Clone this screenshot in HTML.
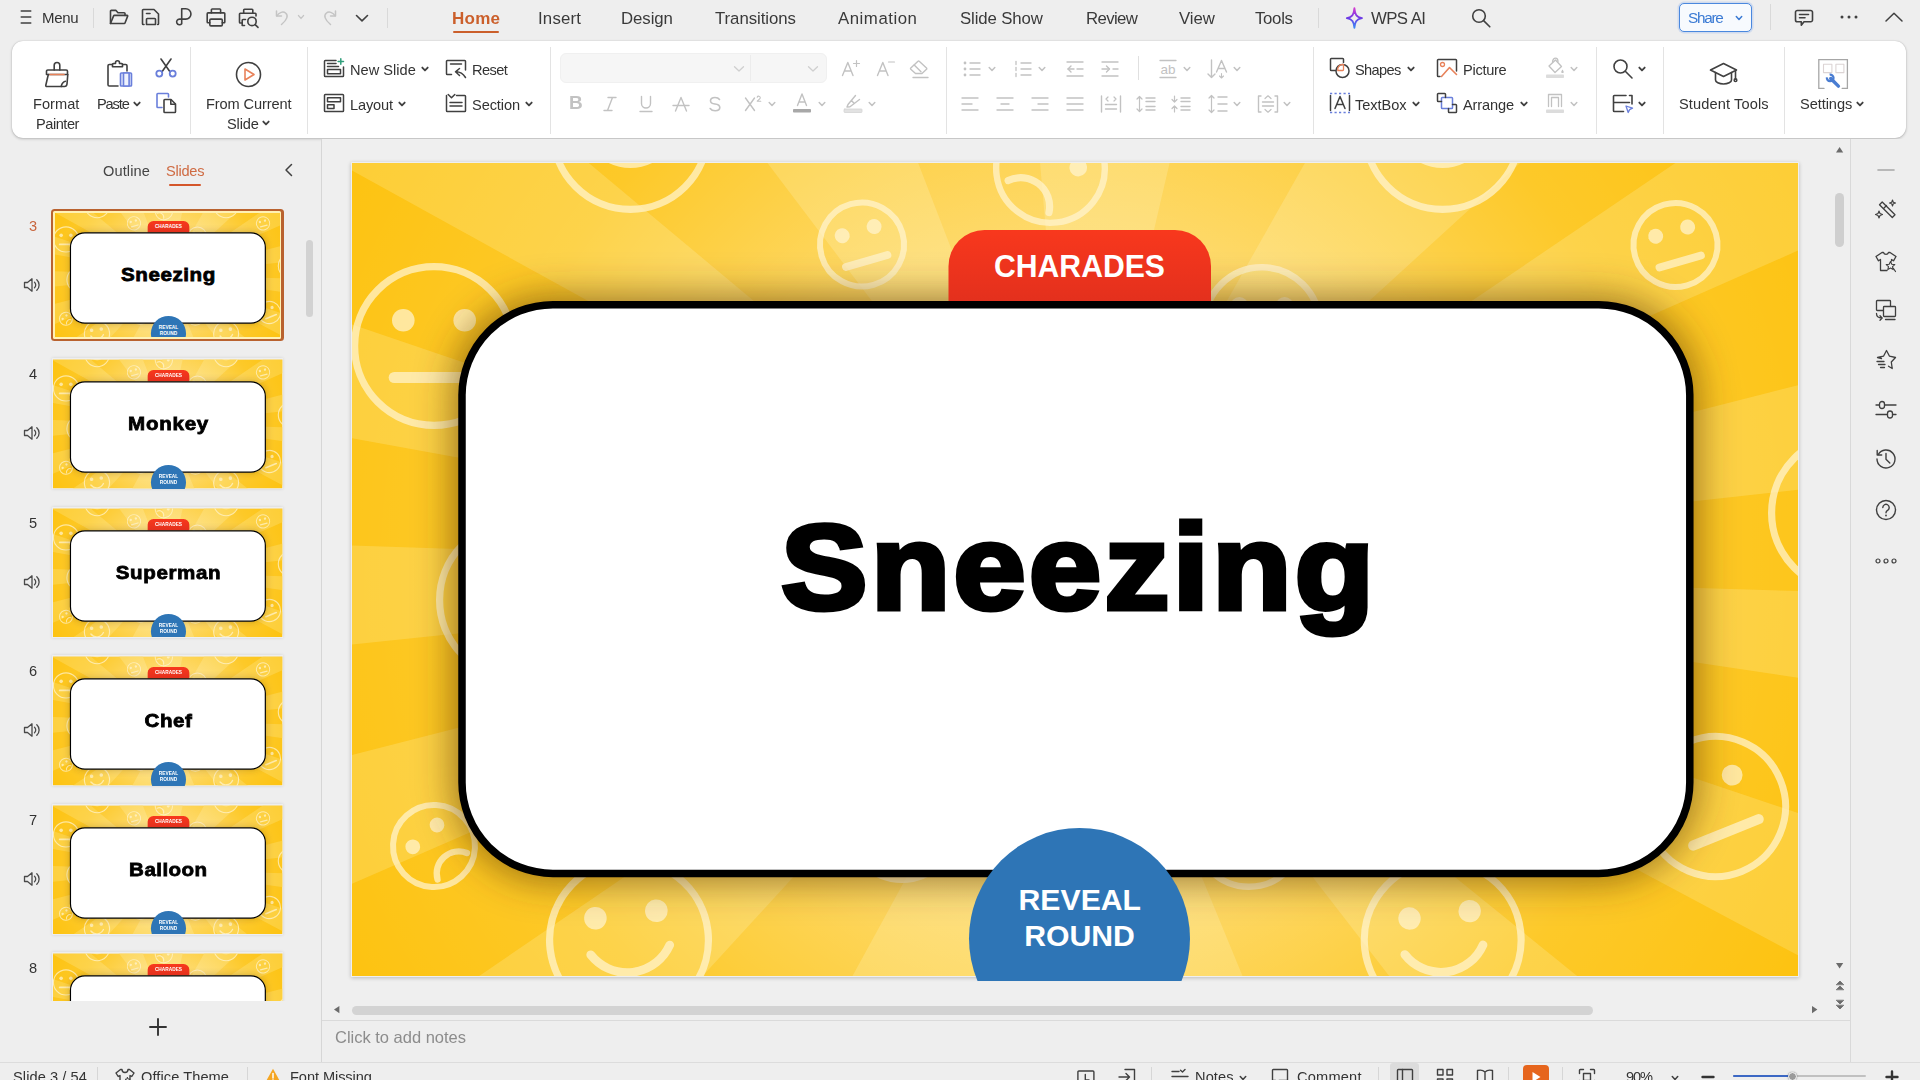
<!DOCTYPE html><html lang="en"><head><meta charset="utf-8"><title>WPS Presentation</title><style>
*{box-sizing:border-box;margin:0;padding:0}
html,body{width:1920px;height:1080px;overflow:hidden;background:#eee}
body{font-family:"Liberation Sans",Arial,sans-serif;color:#333;position:relative;font-size:14.6px}
.a{position:absolute}
.t{position:absolute;white-space:nowrap;line-height:20px;height:20px;will-change:transform}
.tab{position:absolute;white-space:nowrap;font-size:16.8px;line-height:22px;top:7px;color:#3a3a3a;will-change:transform}
.vs{position:absolute;width:1px;background:#dcdcdc}
#ribbon{position:absolute;left:12px;top:41px;width:1894px;height:97px;background:#fff;border-radius:11px;box-shadow:0 1px 3px rgba(0,0,0,.22),0 0 1px rgba(0,0,0,.25)}
.rs{position:absolute;width:1px;top:55px;height:78px;background:#e4e4e4}
.dis{color:#bdbdbd}
svg.ic{overflow:visible}
.ic{position:absolute;overflow:visible}
.num{position:absolute;left:0;width:66px;text-align:center;font-size:14.6px;color:#333;line-height:18px;will-change:transform}
</style></head><body>
<svg class="ic" style="left:20.00px;top:9.20px" width="12" height="16" viewBox="0 0 12 16" fill="none" stroke="#404040" stroke-width="1.45" stroke-linecap="round" stroke-linejoin="round" ><path d="M1.200 2H10.800M1.200 8H10.800M1.200 14H10.800"/></svg><div class="t" style="left:41.50px;top:8px;font-size:15px;letter-spacing:-0.333px;">Menu</div><div class="a" style="left:93px;top:8px;width:1px;height:20px;background:#d9d9d9"></div><svg class="ic" style="left:109.00px;top:8.00px" width="20" height="18" viewBox="0 0 20 18" fill="none" stroke="#404040" stroke-width="1.6" stroke-linecap="round" stroke-linejoin="round" ><path d="M1.5 15.5V3.2a.8.8 0 0 1 .8-.8H7l2 2.4h6.2a.8.8 0 0 1 .8.8V7.4"/><path d="M1.5 15.5L4.6 7.9a.8.8 0 0 1 .75-.5H18.2a.5.5 0 0 1 .47.7L16 15a.8.8 0 0 1-.75.5z"/></svg><svg class="ic" style="left:141.00px;top:8.00px" width="20" height="18" viewBox="0 0 20 18" fill="none" stroke="#404040" stroke-width="1.6" stroke-linecap="round" stroke-linejoin="round" ><path d="M3 16.5H2.3a.8.8 0 0 1-.8-.8V2.3a.8.8 0 0 1 .8-.8H13l4.5 4.5v9.7a.8.8 0 0 1-.8.8H17"/><path d="M5.5 16.5V11.3a.8.8 0 0 1 .8-.8h7.4a.8.8 0 0 1 .8.8V16.5z"/><path d="M5.5 5.5H9"/></svg><svg class="ic" style="left:175.00px;top:8.00px" width="18" height="18" viewBox="0 0 18 18" fill="none" stroke="#404040" stroke-width="1.6" stroke-linecap="round" stroke-linejoin="round" ><path d="M6.700 .8H10.800a5.150 5.150 0 0 1 0 10.300H4.500a2.850 2.850 0 1 0 2.200 4.650V.8"/></svg><svg class="ic" style="left:205.50px;top:7.70px" width="20" height="19" viewBox="0 0 20 19" fill="none" stroke="#404040" stroke-width="1.6" stroke-linecap="round" stroke-linejoin="round" ><path d="M5.400 4.900V1.800a.8.800 0 0 1 .8-.8h7.600a.8.800 0 0 1 .8.800V4.900"/><path d="M3.800 14.800H2a.8.800 0 0 1-.8-.8V5.700a.8.800 0 0 1 .8-.8H18a.8.800 0 0 1 .8.800V14a.8.800 0 0 1-.8.800H16.300"/><rect x="3.800" y="11.100" width="12.500" height="6.800" rx="1.200"/></svg><svg class="ic" style="left:237.50px;top:7.50px" width="21" height="20" viewBox="0 0 21 20" fill="none" stroke="#404040" stroke-width="1.6" stroke-linecap="round" stroke-linejoin="round" ><path d="M5.700 5.200V2a.8.800 0 0 1 .8-.8h7.500a.8.800 0 0 1 .8.800V5.200"/><path d="M4.200 15H2.300a.8.800 0 0 1-.8-.8V6a.8.800 0 0 1 .8-.8H17.200a.8.800 0 0 1 .8.800V8"/><path d="M7.500 11.500H5a.8.800 0 0 0-.8.800V17.500h2.300"/><circle cx="14" cy="13.400" r="4.200"/><path d="M17.200 16.600L20 19.400"/></svg><svg class="ic" style="left:274.50px;top:9.00px" width="14" height="17" viewBox="0 0 14 17" fill="none" stroke="#c4c4c4" stroke-width="1.5" stroke-linecap="round" stroke-linejoin="round" ><path d="M1.5 2v5h5"/><path d="M1.8 6.8C4 3.3 8.2 2 10.8 4.2c2.600 2.200 1.500 6.500-4.300 11.300"/></svg><svg class="ic" style="left:295.80px;top:13.00px" width="10" height="8" viewBox="0 0 10 8" fill="none" stroke="#c4c4c4" stroke-width="1.4" stroke-linecap="round" stroke-linejoin="round" ><path d="M2.5 2.6L5 5.4L7.5 2.6"/></svg><svg class="ic" style="left:322.50px;top:9.00px" width="14" height="17" viewBox="0 0 14 17" fill="none" stroke="#c4c4c4" stroke-width="1.5" stroke-linecap="round" stroke-linejoin="round" ><path d="M12.500 2v5h-5"/><path d="M12.200 6.800C10 3.300 5.800 2 3.200 4.200c-2.600 2.200-1.500 6.500 4.300 11.300"/></svg><svg class="ic" style="left:355.00px;top:14.00px" width="14" height="8" viewBox="0 0 14 8" fill="none" stroke="#404040" stroke-width="1.6" stroke-linecap="round" stroke-linejoin="round" ><path d="M1.500 1.500L7 6.800L12.500 1.500"/></svg><div class="a" style="left:387px;top:8px;width:1px;height:20px;background:#d9d9d9"></div><div class="tab" style="left:452.00px;top:8px;font-size:17px;font-weight:bold;letter-spacing:0.267px;color:#cb5f2b">Home</div><div class="a" style="left:453px;top:30.700px;width:46px;height:2.600px;border-radius:1.300px;background:#cb5f2b"></div><div class="tab" style="left:538.00px;top:8px;font-size:16.8px;letter-spacing:0.200px;">Insert</div><div class="tab" style="left:621.00px;top:8px;font-size:16.8px;letter-spacing:-0.060px;">Design</div><div class="tab" style="left:715.00px;top:8px;font-size:16.8px;letter-spacing:-0.050px;">Transitions</div><div class="tab" style="left:838.00px;top:8px;font-size:16.8px;letter-spacing:0.537px;">Animation</div><div class="tab" style="left:960.00px;top:8px;font-size:16.8px;letter-spacing:-0.122px;">Slide Show</div><div class="tab" style="left:1086.00px;top:8px;font-size:16.8px;letter-spacing:-0.640px;">Review</div><div class="tab" style="left:1179.00px;top:8px;font-size:16.8px;letter-spacing:-0.067px;">View</div><div class="tab" style="left:1255.00px;top:8px;font-size:16.8px;letter-spacing:-0.300px;">Tools</div><div class="a" style="left:1318px;top:8px;width:1px;height:20px;background:#d9d9d9"></div><svg class="ic" style="left:1346.2px;top:6.5px" width="17" height="22" viewBox="0 0 17 22"><defs><linearGradient id="ai" x1="0" y1="0" x2="0" y2="1"><stop offset="0" stop-color="#d23ad0"/><stop offset=".5" stop-color="#6c3be6"/><stop offset="1" stop-color="#3a8af5"/></linearGradient></defs><path d="M8.400 1.200C9 7 10 10.200 16 11.200C10 12.200 9 15.200 8.400 20.800C7.800 15.200 6.800 12.200 .8 11.200C6.800 10.200 7.800 7 8.400 1.200z" fill="none" stroke="url(#ai)" stroke-width="1.800" stroke-linejoin="round"/></svg><div class="tab" style="left:1371.00px;top:8px;font-size:16.8px;letter-spacing:-0.580px;">WPS AI</div><svg class="ic" style="left:1470.50px;top:7.60px" width="20" height="20" viewBox="0 0 20 20" fill="none" stroke="#404040" stroke-width="1.6" stroke-linecap="round" stroke-linejoin="round" ><circle cx="8" cy="8" r="6.300"/><path d="M12.600 12.600L18.800 18.800"/></svg><div class="a" style="left:1679px;top:3px;width:73px;height:29px;border:1.5px solid #4a88de;border-radius:5px;background:#f7fafe;box-shadow:0 0 0 1.5px rgba(120,165,240,.25)"></div><div class="t" style="left:1687.80px;top:7.5px;font-size:15.3px;letter-spacing:-1.250px;color:#3a7ad4">Share</div><svg class="ic" style="left:1734.30px;top:13.50px" width="10" height="8" viewBox="0 0 10 8" fill="none" stroke="#3a7ad4" stroke-width="1.5" stroke-linecap="round" stroke-linejoin="round" ><path d="M2.3 2.5L5 5.5L7.7 2.5"/></svg><div class="a" style="left:1770px;top:4px;width:1px;height:26px;background:#d9d9d9"></div><svg class="ic" style="left:1793.70px;top:8.80px" width="20" height="18" viewBox="0 0 20 18" fill="none" stroke="#404040" stroke-width="1.6" stroke-linecap="round" stroke-linejoin="round" ><path d="M3.300 1.500H16.700a1.800 1.800 0 0 1 1.800 1.800V11a1.800 1.800 0 0 1-1.800 1.800H10L7.300 16.200V12.800H3.300A1.800 1.800 0 0 1 1.500 11V3.300a1.800 1.800 0 0 1 1.800-1.800z"/><path d="M5.500 5.500H14.500M5.500 8.800H11"/></svg><svg class="ic" style="left:1840.00px;top:15.00px" width="18" height="4" viewBox="0 0 18 4" fill="none" stroke="#404040" stroke-width="1.5" stroke-linecap="round" stroke-linejoin="round" ><circle cx="2" cy="2" r="1.500" fill="#404040" stroke="none"/><circle cx="9" cy="2" r="1.500" fill="#404040" stroke="none"/><circle cx="16" cy="2" r="1.500" fill="#404040" stroke="none"/></svg><svg class="ic" style="left:1885.00px;top:11.50px" width="18" height="10" viewBox="0 0 18 10" fill="none" stroke="#404040" stroke-width="1.5" stroke-linecap="round" stroke-linejoin="round" ><path d="M1 9L9 1.200L17 9"/></svg>
<div id="ribbon"></div>
<svg class="ic" style="left:43.50px;top:60.70px" width="26" height="27" viewBox="0 0 26 27" fill="none" stroke="#404040" stroke-width="1.6" stroke-linecap="round" stroke-linejoin="round" ><path d="M10.200 9V4.300a2.800 2.800 0 0 1 5.600 0V9"/><path d="M3.800 9H22.200a1.300 1.300 0 0 1 1.300 1.300V13.500H2.500V10.300A1.300 1.300 0 0 1 3.800 9z"/><path d="M4.300 13.500L1.800 24.300a1 1 0 0 0 1 1.200H20.500c1.600 0 2.300-1 2.500-2.500l.8-9.500"/><path d="M17.200 25.500c.6-2.800 1.800-4.600 4.200-5.200"/><path d="M6 13.500H20" stroke="#e8825a"/></svg><div class="t" style="left:32.70px;top:94.39999999999999px;font-size:14.6px;letter-spacing:0.020px;">Format</div><div class="t" style="left:36.00px;top:114.1px;font-size:14.6px;letter-spacing:-0.467px;">Painter</div><svg class="ic" style="left:105.00px;top:60.30px" width="28" height="28" viewBox="0 0 28 28" fill="none" stroke="#404040" stroke-width="1.6" stroke-linecap="round" stroke-linejoin="round" ><path d="M7.500 4.500H4.300A1.300 1.300 0 0 0 3 5.800V24.700A1.300 1.300 0 0 0 4.300 26H13"/><path d="M17.500 4.500h3.200A1.300 1.300 0 0 1 22 5.800V11"/><path d="M7.500 6.800V4.300a.8.800 0 0 1 .8-.8h2.200V2.800a2 2 0 0 1 4 0v.7h2.200a.8.800 0 0 1 .8.800V6.800z"/><rect x="15.500" y="13" width="11" height="13" rx=".8" stroke="#6a7fdb" fill="#dfe6fb"/><rect x="18.500" y="13" width="5.600" height="13" stroke="#6a7fdb" fill="#eef2fd"/></svg><div class="t" style="left:96.90px;top:94.39999999999999px;font-size:14.6px;letter-spacing:-1.125px;">Paste</div><svg class="ic" style="left:132.00px;top:100.20px" width="10" height="8" viewBox="0 0 10 8" fill="none" stroke="#404040" stroke-width="1.8" stroke-linecap="round" stroke-linejoin="round" ><path d="M2.3 2.55L5 5.45L7.7 2.55"/></svg><svg class="ic" style="left:154.50px;top:58.30px" width="22" height="20" viewBox="0 0 22 20" fill="none" stroke="#404040" stroke-width="1.6" stroke-linecap="round" stroke-linejoin="round" ><path d="M6 1L14.800 13.500M16 1L7.200 13.500"/><circle cx="4.300" cy="15.600" r="3" stroke="#6a7fdb" stroke-width="1.800"/><circle cx="17.700" cy="15.600" r="3" stroke="#6a7fdb" stroke-width="1.800"/></svg><svg class="ic" style="left:154.50px;top:92.40px" width="22" height="22" viewBox="0 0 22 22" fill="none" stroke="#404040" stroke-width="1.6" stroke-linecap="round" stroke-linejoin="round" ><path d="M7 15.500H2.800a.8.800 0 0 1-.8-.8V2.300a.8.800 0 0 1 .8-.8H12.700a.8.800 0 0 1 .8.800V5" stroke="#6a7fdb"/><path d="M9.800 7.500H16L20.500 12V19.700a.8.800 0 0 1-.8.800H9.800a.8.800 0 0 1-.8-.8V8.300a.8.800 0 0 1 .8-.8z"/><path d="M15.800 7.800V12.200H20.200"/></svg><div class="a" style="left:190px;top:47px;width:1px;height:87px;background:#e3e3e3"></div><svg class="ic" style="left:235.00px;top:60.70px" width="27" height="27" viewBox="0 0 27 27" fill="none" stroke="#404040" stroke-width="1.6" stroke-linecap="round" stroke-linejoin="round" ><circle cx="13.500" cy="13.500" r="12"/><path d="M10 8L19 13.500L10 19z" stroke="#e8825a" stroke-width="1.600"/></svg><div class="t" style="left:206.00px;top:94.39999999999999px;font-size:14.6px;letter-spacing:-0.100px;">From Current</div><div class="t" style="left:227.00px;top:114.1px;font-size:14.6px;letter-spacing:-0.125px;">Slide</div><svg class="ic" style="left:261.00px;top:118.80px" width="10" height="8" viewBox="0 0 10 8" fill="none" stroke="#404040" stroke-width="1.8" stroke-linecap="round" stroke-linejoin="round" ><path d="M2.3 2.55L5 5.45L7.7 2.55"/></svg><div class="a" style="left:307px;top:47px;width:1px;height:87px;background:#e3e3e3"></div><svg class="ic" style="left:323.00px;top:58.30px" width="22" height="20" viewBox="0 0 22 20" fill="none" stroke="#404040" stroke-width="1.5" stroke-linecap="round" stroke-linejoin="round" ><path d="M13 2.500H2.300a.8.800 0 0 0-.8.800V17.700a.8.800 0 0 0 .8.800H19.700a.8.800 0 0 0 .8-.8V9"/><path d="M4.500 5.500H13M4.500 8.500H15.500"/><rect x="4.500" y="11.500" width="13" height="4.200"/><path d="M17.800 .8V6.200M15.100 3.500H20.500" stroke="#2f9e7a" stroke-width="1.500"/></svg><div class="t" style="left:349.70px;top:59.5px;font-size:14.6px;letter-spacing:0.012px;">New Slide</div><svg class="ic" style="left:420.20px;top:65.00px" width="10" height="8" viewBox="0 0 10 8" fill="none" stroke="#404040" stroke-width="1.8" stroke-linecap="round" stroke-linejoin="round" ><path d="M2.3 2.55L5 5.45L7.7 2.55"/></svg><svg class="ic" style="left:323.00px;top:93.30px" width="22" height="20" viewBox="0 0 22 20" fill="none" stroke="#404040" stroke-width="1.5" stroke-linecap="round" stroke-linejoin="round" ><rect x="1.500" y="1.500" width="19" height="17" rx=".8"/><rect x="4.500" y="4.800" width="13" height="4"/><rect x="4.500" y="11.800" width="6.500" height="3.600"/></svg><div class="t" style="left:349.70px;top:94.5px;font-size:14.6px;letter-spacing:-0.160px;">Layout</div><svg class="ic" style="left:397.20px;top:99.80px" width="10" height="8" viewBox="0 0 10 8" fill="none" stroke="#404040" stroke-width="1.8" stroke-linecap="round" stroke-linejoin="round" ><path d="M2.3 2.55L5 5.45L7.7 2.55"/></svg><svg class="ic" style="left:445.00px;top:58.60px" width="22" height="20" viewBox="0 0 22 20" fill="none" stroke="#404040" stroke-width="1.5" stroke-linecap="round" stroke-linejoin="round" ><path d="M6.500 15.500H2.300a.8.800 0 0 1-.8-.8V2.300a.8.800 0 0 1 .8-.8H19.700a.8.800 0 0 1 .8.800V11"/><path d="M5.500 5H16.500"/><path d="M20.500 18.500C18 14.500 15 12.800 11 12.800M14.500 9.500L10.500 12.800L14.500 16.500"/></svg><div class="t" style="left:471.50px;top:59.5px;font-size:14.6px;letter-spacing:-0.575px;">Reset</div><svg class="ic" style="left:445.00px;top:92.80px" width="22" height="20" viewBox="0 0 22 20" fill="none" stroke="#404040" stroke-width="1.5" stroke-linecap="round" stroke-linejoin="round" ><path d="M11.500 2.500H19.700a.8.800 0 0 1 .8.800V17.700a.8.800 0 0 1-.8.800H2.300a.8.800 0 0 1-.8-.8V2.500"/><path d="M3.200 1.500L6.500 4.800L9.800 1.500"/><path d="M5 9.500H17M5 13H17"/></svg><div class="t" style="left:471.50px;top:94.5px;font-size:14.6px;letter-spacing:-0.100px;">Section</div><svg class="ic" style="left:524.40px;top:99.80px" width="10" height="8" viewBox="0 0 10 8" fill="none" stroke="#404040" stroke-width="1.8" stroke-linecap="round" stroke-linejoin="round" ><path d="M2.3 2.55L5 5.45L7.7 2.55"/></svg><div class="a" style="left:550px;top:47px;width:1px;height:87px;background:#e3e3e3"></div><div class="a" style="left:560px;top:53px;width:267px;height:30px;border-radius:6px;background:#f6f6f6;border:1px solid #f0f0f0"></div><div class="a" style="left:750px;top:55px;width:1px;height:26px;background:#ececec"></div><svg class="ic" style="left:732.50px;top:64.50px" width="12" height="8" viewBox="0 0 12 8" fill="none" stroke="#cfcfcf" stroke-width="1.3" stroke-linecap="round" stroke-linejoin="round" ><path d="M1.500 1.800L6 6L10.500 1.800"/></svg><svg class="ic" style="left:807.00px;top:64.50px" width="12" height="8" viewBox="0 0 12 8" fill="none" stroke="#cfcfcf" stroke-width="1.3" stroke-linecap="round" stroke-linejoin="round" ><path d="M1.500 1.800L6 6L10.500 1.800"/></svg><svg class="ic" style="left:840.50px;top:59.00px" width="20" height="18" viewBox="0 0 20 18" fill="none" stroke="#c2c2c2" stroke-width="1.4" stroke-linecap="round" stroke-linejoin="round" ><path d="M1.500 16.500L6.800 3.500L12 16.500M3.300 12H10.200"/><path d="M15.500 1.500V7.500M12.500 4.500H18.500" stroke-width="1.200"/></svg><svg class="ic" style="left:875.50px;top:59.00px" width="20" height="18" viewBox="0 0 20 18" fill="none" stroke="#c2c2c2" stroke-width="1.4" stroke-linecap="round" stroke-linejoin="round" ><path d="M1.500 16.500L6.800 3.500L12 16.500M3.300 12H10.200"/><path d="M12.500 3H18.500" stroke-width="1.200"/></svg><svg class="ic" style="left:908.00px;top:59.00px" width="22" height="20" viewBox="0 0 22 20" fill="none" stroke="#c2c2c2" stroke-width="1.4" stroke-linecap="round" stroke-linejoin="round" ><path d="M7.500 14.500L2.800 10.200a.9.900 0 0 1 0-1.300L10 2.300a.9.900 0 0 1 1.200 0L18.500 9a.9.900 0 0 1 0 1.300L14 14.500z"/><path d="M6.200 6L13 12.800"/><path d="M5 18.500H20"/></svg><div class="t" style="left:569.00px;top:92.6px;font-size:14.6px;font-weight:bold;font-size:19px;color:#c2c2c2">B</div><svg class="ic" style="left:602.00px;top:95.50px" width="16" height="16" viewBox="0 0 16 16" fill="none" stroke="#c2c2c2" stroke-width="1.4" stroke-linecap="round" stroke-linejoin="round" ><path d="M6 1.500H14M2 14.500H10M10.500 1.500L5.500 14.500"/></svg><svg class="ic" style="left:639.00px;top:95.00px" width="14" height="18" viewBox="0 0 14 18" fill="none" stroke="#c2c2c2" stroke-width="1.4" stroke-linecap="round" stroke-linejoin="round" ><path d="M2.500 1.500V8.500a4.500 4.500 0 0 0 9 0V1.500"/><path d="M1 16.500H13"/></svg><svg class="ic" style="left:671.70px;top:95.50px" width="18" height="16" viewBox="0 0 18 16" fill="none" stroke="#c2c2c2" stroke-width="1.4" stroke-linecap="round" stroke-linejoin="round" ><path d="M3.500 15L9 1.500L14.500 15"/><path d="M1 9.500H17"/></svg><svg class="ic" style="left:708.00px;top:95.50px" width="14" height="16" viewBox="0 0 14 16" fill="none" stroke="#c2c2c2" stroke-width="1.6" stroke-linecap="round" stroke-linejoin="round" style="filter:drop-shadow(0 2px 1px rgba(0,0,0,.18))"><path d="M11.500 3.500C10.500 2 9 1.500 7 1.500C4 1.500 2.500 3 2.500 4.800C2.500 7 4.500 7.800 7 8C10 8.300 11.800 9.200 11.800 11.500C11.800 13.500 10 14.700 7.200 14.700C5 14.700 3.200 14 2.200 12.500"/></svg><svg class="ic" style="left:744.00px;top:94.00px" width="18" height="18" viewBox="0 0 18 18" fill="none" stroke="#c2c2c2" stroke-width="1.4" stroke-linecap="round" stroke-linejoin="round" ><path d="M1.500 4L10.500 16.500M10.500 4L1.500 16.500"/><path d="M13.200 3.200a1.600 1.600 0 0 1 3.100.5c0 1-1.500 1.900-3.100 3.500H16.800" stroke-width="1.100"/></svg><svg class="ic" style="left:766.90px;top:100.00px" width="10" height="8" viewBox="0 0 10 8" fill="none" stroke="#c2c2c2" stroke-width="1.5" stroke-linecap="round" stroke-linejoin="round" ><path d="M2.2 2.5L5 5.5L7.8 2.5"/></svg><svg class="ic" style="left:792.00px;top:92.00px" width="20" height="22" viewBox="0 0 20 22" fill="none" stroke="#c2c2c2" stroke-width="1.4" stroke-linecap="round" stroke-linejoin="round" ><path d="M5.500 13.500L10 2L14.500 13.500M7 10H13"/><rect x="1" y="17" width="18" height="3.500" rx=".8" fill="#a8a8a8" stroke="none"/></svg><svg class="ic" style="left:816.90px;top:100.00px" width="10" height="8" viewBox="0 0 10 8" fill="none" stroke="#c2c2c2" stroke-width="1.5" stroke-linecap="round" stroke-linejoin="round" ><path d="M2.2 2.5L5 5.5L7.8 2.5"/></svg><svg class="ic" style="left:843.00px;top:92.00px" width="20" height="22" viewBox="0 0 20 22" fill="none" stroke="#c2c2c2" stroke-width="1.4" stroke-linecap="round" stroke-linejoin="round" ><path d="M5 12.500L12.500 3.500M5 12.500L4 15L7 14.800L16.500 7.500M8.500 8.500L11 11.200"/><rect x="1" y="17" width="18" height="3.500" rx=".8" fill="#e2e2e2" stroke="#d4d4d4" stroke-width=".8"/></svg><svg class="ic" style="left:866.90px;top:100.00px" width="10" height="8" viewBox="0 0 10 8" fill="none" stroke="#c2c2c2" stroke-width="1.5" stroke-linecap="round" stroke-linejoin="round" ><path d="M2.2 2.5L5 5.5L7.8 2.5"/></svg><div class="a" style="left:946px;top:47px;width:1px;height:87px;background:#e3e3e3"></div><svg class="ic" style="left:963.00px;top:60.50px" width="18" height="16" viewBox="0 0 18 16" fill="none" stroke="#c2c2c2" stroke-width="1.4" stroke-linecap="round" stroke-linejoin="round" ><path d="M7 2H17"/><path d="M7 8H17"/><path d="M7 14H17"/><circle cx="2" cy="2" r="1.400" fill="#c2c2c2" stroke="none"/><circle cx="2" cy="8" r="1.400" fill="#c2c2c2" stroke="none"/><circle cx="2" cy="14" r="1.400" fill="#c2c2c2" stroke="none"/></svg><svg class="ic" style="left:986.50px;top:64.70px" width="10" height="8" viewBox="0 0 10 8" fill="none" stroke="#c2c2c2" stroke-width="1.5" stroke-linecap="round" stroke-linejoin="round" ><path d="M2.2 2.5L5 5.5L7.8 2.5"/></svg><svg class="ic" style="left:1013.60px;top:60.50px" width="18" height="16" viewBox="0 0 18 16" fill="none" stroke="#c2c2c2" stroke-width="1.4" stroke-linecap="round" stroke-linejoin="round" ><path d="M7 2H17"/><path d="M7 8H17"/><path d="M7 14H17"/><path d="M2 0.5v3" stroke-width="1.300"/><path d="M2 6.5v3" stroke-width="1.300"/><path d="M2 12.5v3" stroke-width="1.300"/></svg><svg class="ic" style="left:1037.00px;top:64.70px" width="10" height="8" viewBox="0 0 10 8" fill="none" stroke="#c2c2c2" stroke-width="1.5" stroke-linecap="round" stroke-linejoin="round" ><path d="M2.2 2.5L5 5.5L7.8 2.5"/></svg><svg class="ic" style="left:1066.00px;top:60.50px" width="18" height="16" viewBox="0 0 18 16" fill="none" stroke="#c2c2c2" stroke-width="1.4" stroke-linecap="round" stroke-linejoin="round" ><path d="M1 1H17"/><path d="M1 15H17"/><path d="M2 8H8"/><path d="M11 8H17"/><path d="M5 5L2 8L5 11" /></svg><svg class="ic" style="left:1101.00px;top:60.50px" width="18" height="16" viewBox="0 0 18 16" fill="none" stroke="#c2c2c2" stroke-width="1.4" stroke-linecap="round" stroke-linejoin="round" ><path d="M1 1H17"/><path d="M1 15H17"/><path d="M1 8H8"/><path d="M12 8H17"/><path d="M5.500 5L8.500 8L5.500 11" /></svg><div class="a" style="left:1138px;top:56px;width:1px;height:24px;background:#e0e0e0"></div><svg class="ic" style="left:1157.60px;top:58.50px" width="20" height="20" viewBox="0 0 20 20" fill="none" stroke="#c2c2c2" stroke-width="1.3" stroke-linecap="round" stroke-linejoin="round" ><path d="M2 1.500H18M2 18.500H18"/><text x="10" y="15" font-size="13.500" text-anchor="middle" fill="#c2c2c2" stroke="none" font-family="Liberation Sans,Arial,sans-serif">ab</text></svg><svg class="ic" style="left:1182.00px;top:64.70px" width="10" height="8" viewBox="0 0 10 8" fill="none" stroke="#c2c2c2" stroke-width="1.5" stroke-linecap="round" stroke-linejoin="round" ><path d="M2.2 2.5L5 5.5L7.8 2.5"/></svg><svg class="ic" style="left:1207.00px;top:58.50px" width="22" height="20" viewBox="0 0 22 20" fill="none" stroke="#c2c2c2" stroke-width="1.4" stroke-linecap="round" stroke-linejoin="round" ><path d="M4.500 1V18.500M1 15L4.500 18.500L8 15"/><path d="M9.500 13L14.500 1.500L19.500 13M11.200 9.500H17.800"/><path d="M14.500 14.500V19M12.500 17L14.500 19L16.500 17" stroke-width="1.100"/></svg><svg class="ic" style="left:1231.90px;top:64.70px" width="10" height="8" viewBox="0 0 10 8" fill="none" stroke="#c2c2c2" stroke-width="1.5" stroke-linecap="round" stroke-linejoin="round" ><path d="M2.2 2.5L5 5.5L7.8 2.5"/></svg><svg class="ic" style="left:960.70px;top:95.80px" width="18" height="16" viewBox="0 0 18 16" fill="none" stroke="#c2c2c2" stroke-width="1.4" stroke-linecap="round" stroke-linejoin="round" ><path d="M1 2H17"/><path d="M1 8H11"/><path d="M1 14H17"/></svg><svg class="ic" style="left:996.00px;top:95.80px" width="18" height="16" viewBox="0 0 18 16" fill="none" stroke="#c2c2c2" stroke-width="1.4" stroke-linecap="round" stroke-linejoin="round" ><path d="M1 2H17"/><path d="M5 8H13"/><path d="M1 14H17"/></svg><svg class="ic" style="left:1031.00px;top:95.80px" width="18" height="16" viewBox="0 0 18 16" fill="none" stroke="#c2c2c2" stroke-width="1.4" stroke-linecap="round" stroke-linejoin="round" ><path d="M1 2H17"/><path d="M7 8H17"/><path d="M1 14H17"/></svg><svg class="ic" style="left:1066.00px;top:95.80px" width="18" height="16" viewBox="0 0 18 16" fill="none" stroke="#c2c2c2" stroke-width="1.4" stroke-linecap="round" stroke-linejoin="round" ><path d="M1 2H17"/><path d="M1 8H17"/><path d="M1 14H17"/></svg><svg class="ic" style="left:1100.00px;top:94.80px" width="22" height="18" viewBox="0 0 22 18" fill="none" stroke="#c2c2c2" stroke-width="1.4" stroke-linecap="round" stroke-linejoin="round" ><path d="M1.500 1V17M20.500 1V17"/><path d="M5.500 9.500H16.500M5.500 14H16.500"/><path d="M8 2L6 4L8 6M14 2L16 4L14 6" stroke-width="1.200"/></svg><svg class="ic" style="left:1136.00px;top:94.80px" width="20" height="18" viewBox="0 0 20 18" fill="none" stroke="#c2c2c2" stroke-width="1.4" stroke-linecap="round" stroke-linejoin="round" ><path d="M3.500 1.500V16.500M1 4L3.500 1.500L6 4M1 14L3.500 16.500L6 14" stroke-width="1.200"/><path d="M10 3H19M10 6.500H19M10 11.500H19M10 15H19"/></svg><svg class="ic" style="left:1171.00px;top:94.80px" width="20" height="18" viewBox="0 0 20 18" fill="none" stroke="#c2c2c2" stroke-width="1.4" stroke-linecap="round" stroke-linejoin="round" ><path d="M3.500 1V6.500M1 4.500L3.500 7L6 4.500M3.500 17V11.500M1 13.500L3.500 11L6 13.500" stroke-width="1.200"/><path d="M10 3H19M10 6.500H19M10 11.500H19M10 15H19"/></svg><svg class="ic" style="left:1208.00px;top:93.80px" width="20" height="20" viewBox="0 0 20 20" fill="none" stroke="#c2c2c2" stroke-width="1.4" stroke-linecap="round" stroke-linejoin="round" ><path d="M3.500 1.500V18.500M1 4L3.500 1.500L6 4M1 16L3.500 18.500L6 16" stroke-width="1.200"/><path d="M10 3H19M10 10H19M10 17H19"/></svg><svg class="ic" style="left:1231.90px;top:100.00px" width="10" height="8" viewBox="0 0 10 8" fill="none" stroke="#c2c2c2" stroke-width="1.5" stroke-linecap="round" stroke-linejoin="round" ><path d="M2.2 2.5L5 5.5L7.8 2.5"/></svg><svg class="ic" style="left:1257.00px;top:93.80px" width="22" height="20" viewBox="0 0 22 20" fill="none" stroke="#c2c2c2" stroke-width="1.4" stroke-linecap="round" stroke-linejoin="round" ><path d="M4 2H1.500V18H4M18 2H20.500V18H18"/><path d="M5.500 8H16.500M5.500 12H16.500"/><path d="M8 4.500L11 1.800L14 4.500M8 15.500L11 18.200L14 15.500" stroke-width="1.200"/></svg><svg class="ic" style="left:1282.30px;top:100.00px" width="10" height="8" viewBox="0 0 10 8" fill="none" stroke="#c2c2c2" stroke-width="1.5" stroke-linecap="round" stroke-linejoin="round" ><path d="M2.2 2.5L5 5.5L7.8 2.5"/></svg><div class="a" style="left:1313px;top:47px;width:1px;height:87px;background:#e3e3e3"></div><svg class="ic" style="left:1328.50px;top:57.40px" width="22" height="22" viewBox="0 0 22 22" fill="none" stroke="#404040" stroke-width="1.5" stroke-linecap="round" stroke-linejoin="round" ><path d="M6.500 13.500H2.300a.8.800 0 0 1-.8-.8V2.300a.8.800 0 0 1 .8-.8H13.700a.8.800 0 0 1 .8.800V5.500"/><circle cx="13.500" cy="14" r="6.500"/><path d="M14.500 7.600V12.700a.8.800 0 0 1-.8.800H8.800a4.900 4.900 0 0 1 5.700-5.900z" stroke="#e8825a" stroke-width="1.300"/></svg><div class="t" style="left:1355.00px;top:59.5px;font-size:14.6px;letter-spacing:-0.640px;">Shapes</div><svg class="ic" style="left:1406.00px;top:65.00px" width="10" height="8" viewBox="0 0 10 8" fill="none" stroke="#404040" stroke-width="1.8" stroke-linecap="round" stroke-linejoin="round" ><path d="M2.3 2.55L5 5.45L7.7 2.55"/></svg><svg class="ic" style="left:1328.50px;top:92.40px" width="22" height="22" viewBox="0 0 22 22" fill="none" stroke="#404040" stroke-width="1.5" stroke-linecap="round" stroke-linejoin="round" ><path d="M1.500 3.500V18.500M20.500 3.500V18.500M6 16.500L11 4.500L16 16.500M7.800 12.500H14.200"/><path d="M1 1.500H21M1 20.500H21" stroke="#6a7fdb" stroke-dasharray="2.200 2.300" stroke-linecap="butt" stroke-width="1.300"/></svg><div class="t" style="left:1355.00px;top:94.5px;font-size:14.6px;letter-spacing:-0.050px;">TextBox</div><svg class="ic" style="left:1411.00px;top:100.00px" width="10" height="8" viewBox="0 0 10 8" fill="none" stroke="#404040" stroke-width="1.8" stroke-linecap="round" stroke-linejoin="round" ><path d="M2.3 2.55L5 5.45L7.7 2.55"/></svg><svg class="ic" style="left:1436.00px;top:58.20px" width="22" height="20" viewBox="0 0 22 20" fill="none" stroke="#404040" stroke-width="1.5" stroke-linecap="round" stroke-linejoin="round" ><path d="M4 18.500H2.300a.8.800 0 0 1-.8-.8V2.300a.8.800 0 0 1 .8-.8H19.700a.8.800 0 0 1 .8.800V13"/><circle cx="6.500" cy="6.500" r="2" stroke="#e8825a" stroke-width="1.300"/><path d="M5.500 18.500L13.500 9.500L20.500 16.500" stroke="#e8825a" stroke-width="1.600"/></svg><div class="t" style="left:1462.80px;top:59.5px;font-size:14.6px;letter-spacing:-0.283px;">Picture</div><svg class="ic" style="left:1436.00px;top:92.40px" width="22" height="22" viewBox="0 0 22 22" fill="none" stroke="#404040" stroke-width="1.5" stroke-linecap="round" stroke-linejoin="round" ><rect x="5.500" y="5.500" width="11" height="11" rx=".8" stroke="#6a7fdb"/><path d="M5.500 9.500H2.300a.8.800 0 0 1-.8-.8V2.300a.8.800 0 0 1 .8-.8H8.700a.8.800 0 0 1 .8.800V5.500"/><path d="M16.500 12.500H19.700a.8.800 0 0 1 .8.800V19.700a.8.800 0 0 1-.8.800H13.300a.8.800 0 0 1-.8-.8V16.500"/></svg><div class="t" style="left:1462.80px;top:94.5px;font-size:14.6px;letter-spacing:-0.117px;">Arrange</div><svg class="ic" style="left:1518.80px;top:100.00px" width="10" height="8" viewBox="0 0 10 8" fill="none" stroke="#404040" stroke-width="1.8" stroke-linecap="round" stroke-linejoin="round" ><path d="M2.3 2.55L5 5.45L7.7 2.55"/></svg><svg class="ic" style="left:1544.70px;top:57.00px" width="20" height="22" viewBox="0 0 20 22" fill="none" stroke="#c2c2c2" stroke-width="1.3" stroke-linecap="round" stroke-linejoin="round" ><path d="M4 9L10.500 3L16.500 9.500L10 15.500z"/><path d="M7.500 5.500C7.500 2.500 9 1.200 10.500 1.200S13 2.500 13 4.500"/><path d="M17.500 12.500c.8 1.200 1.200 1.800 1.200 2.400a1.200 1.200 0 0 1-2.400 0c0-.6.400-1.200 1.200-2.400z" fill="#c2c2c2" stroke="none"/><rect x="1" y="17.500" width="18" height="3.500" rx=".8" fill="#dcdcdc" stroke="none"/></svg><svg class="ic" style="left:1569.00px;top:64.70px" width="10" height="8" viewBox="0 0 10 8" fill="none" stroke="#c2c2c2" stroke-width="1.5" stroke-linecap="round" stroke-linejoin="round" ><path d="M2.2 2.5L5 5.5L7.8 2.5"/></svg><svg class="ic" style="left:1544.70px;top:92.00px" width="20" height="22" viewBox="0 0 20 22" fill="none" stroke="#c2c2c2" stroke-width="1.3" stroke-linecap="round" stroke-linejoin="round" ><path d="M3.500 14.500V2.500H16.500V14.500M6.500 14.500V5.500H13.500V14.500"/><rect x="1" y="17.500" width="18" height="3.500" rx=".8" fill="#dcdcdc" stroke="none"/></svg><svg class="ic" style="left:1569.00px;top:100.00px" width="10" height="8" viewBox="0 0 10 8" fill="none" stroke="#c2c2c2" stroke-width="1.5" stroke-linecap="round" stroke-linejoin="round" ><path d="M2.2 2.5L5 5.5L7.8 2.5"/></svg><div class="a" style="left:1596px;top:47px;width:1px;height:87px;background:#e3e3e3"></div><svg class="ic" style="left:1611.60px;top:58.00px" width="22" height="22" viewBox="0 0 22 22" fill="none" stroke="#404040" stroke-width="1.6" stroke-linecap="round" stroke-linejoin="round" ><circle cx="8.500" cy="8.500" r="6.500"/><path d="M13.300 13.300L20 20"/></svg><svg class="ic" style="left:1636.50px;top:65.00px" width="10" height="8" viewBox="0 0 10 8" fill="none" stroke="#404040" stroke-width="1.8" stroke-linecap="round" stroke-linejoin="round" ><path d="M2.3 2.55L5 5.45L7.7 2.55"/></svg><svg class="ic" style="left:1611.60px;top:93.00px" width="22" height="22" viewBox="0 0 22 22" fill="none" stroke="#404040" stroke-width="1.6" stroke-linecap="round" stroke-linejoin="round" ><path d="M14 2.500H2.300a.8.800 0 0 0-.8.800V9.500H17.500M1.500 9.500V17.700a.8.800 0 0 0 .8.800H11.500M17.500 2.500H20V11"/><path d="M14 13L20.500 15.200L17.600 16.600L16.200 19.500z" stroke="#6a7fdb" stroke-width="1.300"/></svg><svg class="ic" style="left:1636.50px;top:100.20px" width="10" height="8" viewBox="0 0 10 8" fill="none" stroke="#404040" stroke-width="1.8" stroke-linecap="round" stroke-linejoin="round" ><path d="M2.3 2.55L5 5.45L7.7 2.55"/></svg><div class="a" style="left:1663px;top:47px;width:1px;height:87px;background:#e3e3e3"></div><svg class="ic" style="left:1708.60px;top:61.50px" width="30" height="24" viewBox="0 0 30 24" fill="none" stroke="#404040" stroke-width="1.6" stroke-linecap="round" stroke-linejoin="round" ><path d="M1.500 8L14.500 1.500L27.500 8L14.500 14.500z"/><path d="M6.500 10.500V18c0 2 3.500 4 8 4s8-2 8-4V10.500"/><path d="M26.500 8.500V17"/><circle cx="26.500" cy="18.200" r="1.300"/></svg><div class="t" style="left:1678.70px;top:94.39999999999999px;font-size:14.6px;letter-spacing:0.117px;">Student Tools</div><div class="a" style="left:1784px;top:47px;width:1px;height:87px;background:#e3e3e3"></div><svg class="ic" style="left:1817.60px;top:59.20px" width="30" height="30" viewBox="0 0 30 30" fill="none" stroke="#404040" stroke-width="1.5" stroke-linecap="round" stroke-linejoin="round" ><path d="M6 29.400H.8V.6H29.400V29.400H24.200" stroke="#a6a6a6" stroke-width="1.300" stroke-linejoin="miter"/><rect x="5.500" y="5.200" width="8.400" height="8.400" stroke="#dcd4d4" stroke-width="1.100"/><rect x="17.900" y="5.200" width="8" height="8.400" stroke="#dcd4d4" stroke-width="1.100"/><path d="M14 20.700L20.400 27.100" stroke="#4a7dd2" stroke-width="3.400"/><path d="M11.630 15.650A3.300 3.300 0 1 1 8.950 18.330" stroke="#4a7dd2" stroke-width="2.300" fill="none" stroke-linecap="butt"/><circle cx="12.800" cy="19.500" r="1.800" fill="#4a7dd2" stroke="none"/></svg><div class="t" style="left:1800.00px;top:94.39999999999999px;font-size:14.6px;letter-spacing:-0.071px;">Settings</div><svg class="ic" style="left:1854.70px;top:100.20px" width="10" height="8" viewBox="0 0 10 8" fill="none" stroke="#404040" stroke-width="1.8" stroke-linecap="round" stroke-linejoin="round" ><path d="M2.3 2.55L5 5.45L7.7 2.55"/></svg>
<div class="t" style="left:102.50px;top:160.5px;font-size:14.6px;letter-spacing:0.117px;color:#444">Outline</div><div class="t" style="left:165.50px;top:160.5px;font-size:14.6px;letter-spacing:-0.260px;color:#cf6b43">Slides</div><div class="a" style="left:168.500px;top:183.600px;width:32px;height:2px;border-radius:1px;background:#d4562a"></div><svg class="ic" style="left:284.00px;top:163.00px" width="10" height="14" viewBox="0 0 10 14" fill="none" stroke="#404040" stroke-width="1.5" stroke-linecap="round" stroke-linejoin="round" ><path d="M7.500 1.500L2 7L7.500 12.500"/></svg><div class="a" style="left:0;top:139px;width:321px;height:862px;overflow:hidden"><div class="num" style="top:77.5px;color:#c8643c">3</div><svg class="ic" style="left:23.00px;top:137.50px" width="18" height="16" viewBox="0 0 18 16" fill="none" stroke="#4a4a4a" stroke-width="1.3" stroke-linecap="round" stroke-linejoin="round" ><path d="M1.500 5.500H4.500L9 1.800V14.200L4.500 10.500H1.500z"/><path d="M11.500 5.200a3.800 3.800 0 0 1 0 5.600M13.800 2.800a7 7 0 0 1 0 10.400"/></svg><div class="a" style="left:51.100px;top:69.6px;width:232.600px;height:132.200px;border-radius:3.500px;background:#b9622f"></div><div class="a" style="left:53.300px;top:71.8px;width:228.200px;height:127.800px;border-radius:1.500px;background:#fff1b4"></div><div class="a" style="left:55px;top:73.5px;width:224.800px;height:124.400px;overflow:hidden"><svg class="" style="overflow:hidden;position:absolute;left:-2.2px;top:-2.2px" width="229.5" height="129.8" viewBox="0 0 1446 813" font-family="Liberation Sans, Arial, sans-serif" font-weight="bold"><defs>
<radialGradient id="rgt3" gradientUnits="userSpaceOnUse" cx="723" cy="406" r="830"><stop offset="0" stop-color="#fff" stop-opacity=".5"/><stop offset=".42" stop-color="#fff" stop-opacity=".36"/><stop offset=".72" stop-color="#fff" stop-opacity=".1"/><stop offset="1" stop-color="#fff" stop-opacity="0"/></radialGradient>
<linearGradient id="redt3" x1="0" y1="0" x2="0" y2="1"><stop offset="0" stop-color="#f8381d"/><stop offset="1" stop-color="#e3301d"/></linearGradient>
<filter id="sht3" x="-10%" y="-15%" width="120%" height="130%"><feGaussianBlur stdDeviation="19"/></filter>
</defs>
<clipPath id="cpt3"><rect width="1446" height="813"/></clipPath>
<g clip-path="url(#cpt3)"><rect width="1446" height="813" fill="#fdc311"/>
<g fill="#fed755" fill-opacity=".55"><polygon points="723,406.5 569,-1387 1131,-1347"/><polygon points="723,406.5 1609,-1160 2052,-807"/><polygon points="723,406.5 2214,-603 2370,-320"/><polygon points="723,406.5 2467,-38 2512,209"/><polygon points="723,406.5 2522,460 2503,673"/><polygon points="723,406.5 2429,981 2311,1254"/><polygon points="723,406.5 2122,1539 1824,1831"/><polygon points="723,406.5 1409,2071 974,2189"/><polygon points="723,406.5 472,2189 -141,1985"/><polygon points="723,406.5 -493,1734 -764,1421"/><polygon points="723,406.5 -928,1124 -1020,854"/><polygon points="723,406.5 -1067,592 -1076,347"/><polygon points="723,406.5 -1048,85 -982,-171"/><polygon points="723,406.5 -853,-463 -658,-748"/><polygon points="723,406.5 -363,-1029 75,-1273"/></g>
<rect width="1446" height="813" fill="url(#rgt3)"/>
<g stroke="#fff4d0" stroke-opacity=".72"><g transform="translate(278.4 -31.0) rotate(0)"><circle r="77.4" fill="none" stroke-width="7.2"/><circle cx="-30.0" cy="-25.1" r="11.1" fill="#fff4d0" fill-opacity=".72" stroke="none"/><circle cx="30.0" cy="-25.1" r="11.1" fill="#fff4d0" fill-opacity=".72" stroke="none"/><path d="M-38.9 9.7A45.4 45.4 0 0 0 38.9 9.7" fill="none" stroke-width="8.6" stroke-linecap="round"/></g><g transform="translate(510.0 81.5) rotate(-16)"><circle r="42.0" fill="none" stroke-width="6.0"/><circle cx="-16.6" cy="-13.9" r="7.5" fill="#fff4d0" fill-opacity=".72" stroke="none"/><circle cx="16.6" cy="-13.9" r="7.5" fill="#fff4d0" fill-opacity=".72" stroke="none"/><path d="M-21.6 17.1H21.6" fill="none" stroke-width="7.8" stroke-linecap="round"/></g><g transform="translate(698.5 5.5) rotate(38)"><circle r="54.3" fill="none" stroke-width="6.4"/><circle cx="-21.3" cy="-17.8" r="8.8" fill="#fff4d0" fill-opacity=".72" stroke="none"/><circle cx="21.3" cy="-17.8" r="8.8" fill="#fff4d0" fill-opacity=".72" stroke="none"/><path d="M-25.9 35.6A28.8 28.8 0 0 1 25.9 35.6" fill="none" stroke-width="7.2" stroke-linecap="round"/></g><g transform="translate(82.0 183.0) rotate(0)"><circle r="79.4" fill="none" stroke-width="7.3"/><circle cx="-30.7" cy="-25.7" r="11.3" fill="#fff4d0" fill-opacity=".72" stroke="none"/><circle cx="30.7" cy="-25.7" r="11.3" fill="#fff4d0" fill-opacity=".72" stroke="none"/><path d="M-39.8 31.5H39.8" fill="none" stroke-width="11.1" stroke-linecap="round"/></g><g transform="translate(165.0 437.0) rotate(0)"><circle r="77.4" fill="none" stroke-width="7.2"/><circle cx="-30.0" cy="-25.1" r="11.1" fill="#fff4d0" fill-opacity=".72" stroke="none"/><circle cx="30.0" cy="-25.1" r="11.1" fill="#fff4d0" fill-opacity=".72" stroke="none"/><path d="M-38.9 9.7A45.4 45.4 0 0 0 38.9 9.7" fill="none" stroke-width="8.6" stroke-linecap="round"/></g><g transform="translate(82.0 683.0) rotate(-42)"><circle r="41.0" fill="none" stroke-width="6.0"/><circle cx="-16.3" cy="-13.6" r="7.4" fill="#fff4d0" fill-opacity=".72" stroke="none"/><circle cx="16.3" cy="-13.6" r="7.4" fill="#fff4d0" fill-opacity=".72" stroke="none"/><path d="M-19.8 27.3A22.0 22.0 0 0 1 19.8 27.3" fill="none" stroke-width="6.3" stroke-linecap="round"/></g><g transform="translate(277.0 777.0) rotate(-7)"><circle r="79.4" fill="none" stroke-width="7.3"/><circle cx="-30.7" cy="-25.7" r="11.3" fill="#fff4d0" fill-opacity=".72" stroke="none"/><circle cx="30.7" cy="-25.7" r="11.3" fill="#fff4d0" fill-opacity=".72" stroke="none"/><path d="M-39.8 10.0A46.5 46.5 0 0 0 39.8 10.0" fill="none" stroke-width="8.7" stroke-linecap="round"/></g><g transform="translate(1090.7 777.0) rotate(-7)"><circle r="78.4" fill="none" stroke-width="7.2"/><circle cx="-30.3" cy="-25.4" r="11.2" fill="#fff4d0" fill-opacity=".72" stroke="none"/><circle cx="30.3" cy="-25.4" r="11.2" fill="#fff4d0" fill-opacity=".72" stroke="none"/><path d="M-39.4 9.8A45.9 45.9 0 0 0 39.4 9.8" fill="none" stroke-width="8.7" stroke-linecap="round"/></g><g transform="translate(1363.5 643.5) rotate(-22)"><circle r="70.0" fill="none" stroke-width="7.0"/><circle cx="-27.2" cy="-22.8" r="10.4" fill="#fff4d0" fill-opacity=".72" stroke="none"/><circle cx="27.2" cy="-22.8" r="10.4" fill="#fff4d0" fill-opacity=".72" stroke="none"/><path d="M-35.3 27.9H35.3" fill="none" stroke-width="10.2" stroke-linecap="round"/></g><g transform="translate(1497.0 350.0) rotate(0)"><circle r="77.4" fill="none" stroke-width="7.2"/><circle cx="-30.0" cy="-25.1" r="11.1" fill="#fff4d0" fill-opacity=".72" stroke="none"/><circle cx="30.0" cy="-25.1" r="11.1" fill="#fff4d0" fill-opacity=".72" stroke="none"/><path d="M-38.9 9.7A45.4 45.4 0 0 0 38.9 9.7" fill="none" stroke-width="8.6" stroke-linecap="round"/></g><g transform="translate(1323.5 82.0) rotate(-16)"><circle r="42.0" fill="none" stroke-width="6.0"/><circle cx="-16.6" cy="-13.9" r="7.5" fill="#fff4d0" fill-opacity=".72" stroke="none"/><circle cx="16.6" cy="-13.9" r="7.5" fill="#fff4d0" fill-opacity=".72" stroke="none"/><path d="M-21.6 17.1H21.6" fill="none" stroke-width="7.8" stroke-linecap="round"/></g><g transform="translate(1090.6 -31.0) rotate(0)"><circle r="77.4" fill="none" stroke-width="7.2"/><circle cx="-30.0" cy="-25.1" r="11.1" fill="#fff4d0" fill-opacity=".72" stroke="none"/><circle cx="30.0" cy="-25.1" r="11.1" fill="#fff4d0" fill-opacity=".72" stroke="none"/><path d="M-38.9 9.7A45.4 45.4 0 0 0 38.9 9.7" fill="none" stroke-width="8.6" stroke-linecap="round"/></g><g transform="translate(910.0 162.0) rotate(0)"><circle r="57.7" fill="none" stroke-width="6.6"/><circle cx="-22.6" cy="-18.9" r="9.1" fill="#fff4d0" fill-opacity=".72" stroke="none"/><circle cx="22.6" cy="-18.9" r="9.1" fill="#fff4d0" fill-opacity=".72" stroke="none"/><path d="M-29.3 23.2H29.3" fill="none" stroke-width="9.2" stroke-linecap="round"/></g><g transform="translate(550.0 663.0) rotate(0)"><circle r="53.8" fill="none" stroke-width="6.4"/><circle cx="-21.1" cy="-17.7" r="8.7" fill="#fff4d0" fill-opacity=".72" stroke="none"/><circle cx="21.1" cy="-17.7" r="8.7" fill="#fff4d0" fill-opacity=".72" stroke="none"/><path d="M-27.4 6.8A31.9 31.9 0 0 0 27.4 6.8" fill="none" stroke-width="7.1" stroke-linecap="round"/></g><g transform="translate(897.0 670.0) rotate(0)"><circle r="53.8" fill="none" stroke-width="6.4"/><circle cx="-21.1" cy="-17.7" r="8.7" fill="#fff4d0" fill-opacity=".72" stroke="none"/><circle cx="21.1" cy="-17.7" r="8.7" fill="#fff4d0" fill-opacity=".72" stroke="none"/><path d="M-27.4 6.8A31.9 31.9 0 0 0 27.4 6.8" fill="none" stroke-width="7.1" stroke-linecap="round"/></g></g></g>
<rect x="102" y="134" width="1243" height="584" rx="98" fill="#5a3800" fill-opacity=".28" filter="url(#sht3)"/>
<path d="M596.5 139V103a36 36 0 0 1 36-36H823a36 36 0 0 1 36 36V139z" fill="url(#redt3)"/>
<rect x="110" y="141.7" width="1227.800" height="568.800" rx="91" fill="#fff" stroke="#000" stroke-width="7.5"/>
<circle cx="727.5" cy="775.5" r="110.5" fill="#2e75b6"/><text x="727.5" y="113.6" font-size="30.6" fill="#fff" text-anchor="middle" textLength="171" lengthAdjust="spacingAndGlyphs">CHARADES</text><text x="727.8" y="746.8" font-size="30.2" fill="#fff" text-anchor="middle">REVEAL</text><text x="727.5" y="782.8" font-size="30.2" fill="#fff" text-anchor="middle">ROUND</text><text transform="translate(725.5 446) scale(1.08 1)" font-size="120" fill="#000" stroke="#000" stroke-width="5" stroke-linejoin="miter" text-anchor="middle" textLength="549.1" lengthAdjust="spacing">Sneezing</text></svg></div><div class="num" style="top:226.0px;color:#333">4</div><svg class="ic" style="left:23.00px;top:286.00px" width="18" height="16" viewBox="0 0 18 16" fill="none" stroke="#4a4a4a" stroke-width="1.3" stroke-linecap="round" stroke-linejoin="round" ><path d="M1.500 5.500H4.500L9 1.800V14.200L4.500 10.500H1.500z"/><path d="M11.500 5.200a3.800 3.800 0 0 1 0 5.600M13.800 2.800a7 7 0 0 1 0 10.400"/></svg><div class="a" style="left:52px;top:219.0px;width:231px;height:131px;box-shadow:0 0 3px rgba(0,0,0,.12)"></div><svg class="" style="overflow:hidden;position:absolute;left:53px;top:220.0px" width="229.5" height="129.8" viewBox="0 0 1446 813" font-family="Liberation Sans, Arial, sans-serif" font-weight="bold"><defs>
<radialGradient id="rgt4" gradientUnits="userSpaceOnUse" cx="723" cy="406" r="830"><stop offset="0" stop-color="#fff" stop-opacity=".5"/><stop offset=".42" stop-color="#fff" stop-opacity=".36"/><stop offset=".72" stop-color="#fff" stop-opacity=".1"/><stop offset="1" stop-color="#fff" stop-opacity="0"/></radialGradient>
<linearGradient id="redt4" x1="0" y1="0" x2="0" y2="1"><stop offset="0" stop-color="#f8381d"/><stop offset="1" stop-color="#e3301d"/></linearGradient>
<filter id="sht4" x="-10%" y="-15%" width="120%" height="130%"><feGaussianBlur stdDeviation="19"/></filter>
</defs>
<clipPath id="cpt4"><rect width="1446" height="813"/></clipPath>
<g clip-path="url(#cpt4)"><rect width="1446" height="813" fill="#fdc311"/>
<g fill="#fed755" fill-opacity=".55"><polygon points="723,406.5 569,-1387 1131,-1347"/><polygon points="723,406.5 1609,-1160 2052,-807"/><polygon points="723,406.5 2214,-603 2370,-320"/><polygon points="723,406.5 2467,-38 2512,209"/><polygon points="723,406.5 2522,460 2503,673"/><polygon points="723,406.5 2429,981 2311,1254"/><polygon points="723,406.5 2122,1539 1824,1831"/><polygon points="723,406.5 1409,2071 974,2189"/><polygon points="723,406.5 472,2189 -141,1985"/><polygon points="723,406.5 -493,1734 -764,1421"/><polygon points="723,406.5 -928,1124 -1020,854"/><polygon points="723,406.5 -1067,592 -1076,347"/><polygon points="723,406.5 -1048,85 -982,-171"/><polygon points="723,406.5 -853,-463 -658,-748"/><polygon points="723,406.5 -363,-1029 75,-1273"/></g>
<rect width="1446" height="813" fill="url(#rgt4)"/>
<g stroke="#fff4d0" stroke-opacity=".72"><g transform="translate(278.4 -31.0) rotate(0)"><circle r="77.4" fill="none" stroke-width="7.2"/><circle cx="-30.0" cy="-25.1" r="11.1" fill="#fff4d0" fill-opacity=".72" stroke="none"/><circle cx="30.0" cy="-25.1" r="11.1" fill="#fff4d0" fill-opacity=".72" stroke="none"/><path d="M-38.9 9.7A45.4 45.4 0 0 0 38.9 9.7" fill="none" stroke-width="8.6" stroke-linecap="round"/></g><g transform="translate(510.0 81.5) rotate(-16)"><circle r="42.0" fill="none" stroke-width="6.0"/><circle cx="-16.6" cy="-13.9" r="7.5" fill="#fff4d0" fill-opacity=".72" stroke="none"/><circle cx="16.6" cy="-13.9" r="7.5" fill="#fff4d0" fill-opacity=".72" stroke="none"/><path d="M-21.6 17.1H21.6" fill="none" stroke-width="7.8" stroke-linecap="round"/></g><g transform="translate(698.5 5.5) rotate(38)"><circle r="54.3" fill="none" stroke-width="6.4"/><circle cx="-21.3" cy="-17.8" r="8.8" fill="#fff4d0" fill-opacity=".72" stroke="none"/><circle cx="21.3" cy="-17.8" r="8.8" fill="#fff4d0" fill-opacity=".72" stroke="none"/><path d="M-25.9 35.6A28.8 28.8 0 0 1 25.9 35.6" fill="none" stroke-width="7.2" stroke-linecap="round"/></g><g transform="translate(82.0 183.0) rotate(0)"><circle r="79.4" fill="none" stroke-width="7.3"/><circle cx="-30.7" cy="-25.7" r="11.3" fill="#fff4d0" fill-opacity=".72" stroke="none"/><circle cx="30.7" cy="-25.7" r="11.3" fill="#fff4d0" fill-opacity=".72" stroke="none"/><path d="M-39.8 31.5H39.8" fill="none" stroke-width="11.1" stroke-linecap="round"/></g><g transform="translate(165.0 437.0) rotate(0)"><circle r="77.4" fill="none" stroke-width="7.2"/><circle cx="-30.0" cy="-25.1" r="11.1" fill="#fff4d0" fill-opacity=".72" stroke="none"/><circle cx="30.0" cy="-25.1" r="11.1" fill="#fff4d0" fill-opacity=".72" stroke="none"/><path d="M-38.9 9.7A45.4 45.4 0 0 0 38.9 9.7" fill="none" stroke-width="8.6" stroke-linecap="round"/></g><g transform="translate(82.0 683.0) rotate(-42)"><circle r="41.0" fill="none" stroke-width="6.0"/><circle cx="-16.3" cy="-13.6" r="7.4" fill="#fff4d0" fill-opacity=".72" stroke="none"/><circle cx="16.3" cy="-13.6" r="7.4" fill="#fff4d0" fill-opacity=".72" stroke="none"/><path d="M-19.8 27.3A22.0 22.0 0 0 1 19.8 27.3" fill="none" stroke-width="6.3" stroke-linecap="round"/></g><g transform="translate(277.0 777.0) rotate(-7)"><circle r="79.4" fill="none" stroke-width="7.3"/><circle cx="-30.7" cy="-25.7" r="11.3" fill="#fff4d0" fill-opacity=".72" stroke="none"/><circle cx="30.7" cy="-25.7" r="11.3" fill="#fff4d0" fill-opacity=".72" stroke="none"/><path d="M-39.8 10.0A46.5 46.5 0 0 0 39.8 10.0" fill="none" stroke-width="8.7" stroke-linecap="round"/></g><g transform="translate(1090.7 777.0) rotate(-7)"><circle r="78.4" fill="none" stroke-width="7.2"/><circle cx="-30.3" cy="-25.4" r="11.2" fill="#fff4d0" fill-opacity=".72" stroke="none"/><circle cx="30.3" cy="-25.4" r="11.2" fill="#fff4d0" fill-opacity=".72" stroke="none"/><path d="M-39.4 9.8A45.9 45.9 0 0 0 39.4 9.8" fill="none" stroke-width="8.7" stroke-linecap="round"/></g><g transform="translate(1363.5 643.5) rotate(-22)"><circle r="70.0" fill="none" stroke-width="7.0"/><circle cx="-27.2" cy="-22.8" r="10.4" fill="#fff4d0" fill-opacity=".72" stroke="none"/><circle cx="27.2" cy="-22.8" r="10.4" fill="#fff4d0" fill-opacity=".72" stroke="none"/><path d="M-35.3 27.9H35.3" fill="none" stroke-width="10.2" stroke-linecap="round"/></g><g transform="translate(1497.0 350.0) rotate(0)"><circle r="77.4" fill="none" stroke-width="7.2"/><circle cx="-30.0" cy="-25.1" r="11.1" fill="#fff4d0" fill-opacity=".72" stroke="none"/><circle cx="30.0" cy="-25.1" r="11.1" fill="#fff4d0" fill-opacity=".72" stroke="none"/><path d="M-38.9 9.7A45.4 45.4 0 0 0 38.9 9.7" fill="none" stroke-width="8.6" stroke-linecap="round"/></g><g transform="translate(1323.5 82.0) rotate(-16)"><circle r="42.0" fill="none" stroke-width="6.0"/><circle cx="-16.6" cy="-13.9" r="7.5" fill="#fff4d0" fill-opacity=".72" stroke="none"/><circle cx="16.6" cy="-13.9" r="7.5" fill="#fff4d0" fill-opacity=".72" stroke="none"/><path d="M-21.6 17.1H21.6" fill="none" stroke-width="7.8" stroke-linecap="round"/></g><g transform="translate(1090.6 -31.0) rotate(0)"><circle r="77.4" fill="none" stroke-width="7.2"/><circle cx="-30.0" cy="-25.1" r="11.1" fill="#fff4d0" fill-opacity=".72" stroke="none"/><circle cx="30.0" cy="-25.1" r="11.1" fill="#fff4d0" fill-opacity=".72" stroke="none"/><path d="M-38.9 9.7A45.4 45.4 0 0 0 38.9 9.7" fill="none" stroke-width="8.6" stroke-linecap="round"/></g><g transform="translate(910.0 162.0) rotate(0)"><circle r="57.7" fill="none" stroke-width="6.6"/><circle cx="-22.6" cy="-18.9" r="9.1" fill="#fff4d0" fill-opacity=".72" stroke="none"/><circle cx="22.6" cy="-18.9" r="9.1" fill="#fff4d0" fill-opacity=".72" stroke="none"/><path d="M-29.3 23.2H29.3" fill="none" stroke-width="9.2" stroke-linecap="round"/></g><g transform="translate(550.0 663.0) rotate(0)"><circle r="53.8" fill="none" stroke-width="6.4"/><circle cx="-21.1" cy="-17.7" r="8.7" fill="#fff4d0" fill-opacity=".72" stroke="none"/><circle cx="21.1" cy="-17.7" r="8.7" fill="#fff4d0" fill-opacity=".72" stroke="none"/><path d="M-27.4 6.8A31.9 31.9 0 0 0 27.4 6.8" fill="none" stroke-width="7.1" stroke-linecap="round"/></g><g transform="translate(897.0 670.0) rotate(0)"><circle r="53.8" fill="none" stroke-width="6.4"/><circle cx="-21.1" cy="-17.7" r="8.7" fill="#fff4d0" fill-opacity=".72" stroke="none"/><circle cx="21.1" cy="-17.7" r="8.7" fill="#fff4d0" fill-opacity=".72" stroke="none"/><path d="M-27.4 6.8A31.9 31.9 0 0 0 27.4 6.8" fill="none" stroke-width="7.1" stroke-linecap="round"/></g></g></g>
<rect x="102" y="134" width="1243" height="584" rx="98" fill="#5a3800" fill-opacity=".28" filter="url(#sht4)"/>
<path d="M596.5 139V103a36 36 0 0 1 36-36H823a36 36 0 0 1 36 36V139z" fill="url(#redt4)"/>
<rect x="110" y="141.7" width="1227.800" height="568.800" rx="91" fill="#fff" stroke="#000" stroke-width="7.5"/>
<circle cx="727.5" cy="775.5" r="110.5" fill="#2e75b6"/><text x="727.5" y="113.6" font-size="30.6" fill="#fff" text-anchor="middle" textLength="171" lengthAdjust="spacingAndGlyphs">CHARADES</text><text x="727.8" y="746.8" font-size="30.2" fill="#fff" text-anchor="middle">REVEAL</text><text x="727.5" y="782.8" font-size="30.2" fill="#fff" text-anchor="middle">ROUND</text><text transform="translate(725.5 446) scale(1.08 1)" font-size="120" fill="#000" stroke="#000" stroke-width="5" stroke-linejoin="miter" text-anchor="middle" textLength="468.5" lengthAdjust="spacing">Monkey</text></svg><div class="num" style="top:374.5px;color:#333">5</div><svg class="ic" style="left:23.00px;top:434.50px" width="18" height="16" viewBox="0 0 18 16" fill="none" stroke="#4a4a4a" stroke-width="1.3" stroke-linecap="round" stroke-linejoin="round" ><path d="M1.500 5.500H4.500L9 1.800V14.200L4.500 10.500H1.500z"/><path d="M11.500 5.200a3.800 3.800 0 0 1 0 5.600M13.800 2.800a7 7 0 0 1 0 10.400"/></svg><div class="a" style="left:52px;top:367.5px;width:231px;height:131px;box-shadow:0 0 3px rgba(0,0,0,.12)"></div><svg class="" style="overflow:hidden;position:absolute;left:53px;top:368.5px" width="229.5" height="129.8" viewBox="0 0 1446 813" font-family="Liberation Sans, Arial, sans-serif" font-weight="bold"><defs>
<radialGradient id="rgt5" gradientUnits="userSpaceOnUse" cx="723" cy="406" r="830"><stop offset="0" stop-color="#fff" stop-opacity=".5"/><stop offset=".42" stop-color="#fff" stop-opacity=".36"/><stop offset=".72" stop-color="#fff" stop-opacity=".1"/><stop offset="1" stop-color="#fff" stop-opacity="0"/></radialGradient>
<linearGradient id="redt5" x1="0" y1="0" x2="0" y2="1"><stop offset="0" stop-color="#f8381d"/><stop offset="1" stop-color="#e3301d"/></linearGradient>
<filter id="sht5" x="-10%" y="-15%" width="120%" height="130%"><feGaussianBlur stdDeviation="19"/></filter>
</defs>
<clipPath id="cpt5"><rect width="1446" height="813"/></clipPath>
<g clip-path="url(#cpt5)"><rect width="1446" height="813" fill="#fdc311"/>
<g fill="#fed755" fill-opacity=".55"><polygon points="723,406.5 569,-1387 1131,-1347"/><polygon points="723,406.5 1609,-1160 2052,-807"/><polygon points="723,406.5 2214,-603 2370,-320"/><polygon points="723,406.5 2467,-38 2512,209"/><polygon points="723,406.5 2522,460 2503,673"/><polygon points="723,406.5 2429,981 2311,1254"/><polygon points="723,406.5 2122,1539 1824,1831"/><polygon points="723,406.5 1409,2071 974,2189"/><polygon points="723,406.5 472,2189 -141,1985"/><polygon points="723,406.5 -493,1734 -764,1421"/><polygon points="723,406.5 -928,1124 -1020,854"/><polygon points="723,406.5 -1067,592 -1076,347"/><polygon points="723,406.5 -1048,85 -982,-171"/><polygon points="723,406.5 -853,-463 -658,-748"/><polygon points="723,406.5 -363,-1029 75,-1273"/></g>
<rect width="1446" height="813" fill="url(#rgt5)"/>
<g stroke="#fff4d0" stroke-opacity=".72"><g transform="translate(278.4 -31.0) rotate(0)"><circle r="77.4" fill="none" stroke-width="7.2"/><circle cx="-30.0" cy="-25.1" r="11.1" fill="#fff4d0" fill-opacity=".72" stroke="none"/><circle cx="30.0" cy="-25.1" r="11.1" fill="#fff4d0" fill-opacity=".72" stroke="none"/><path d="M-38.9 9.7A45.4 45.4 0 0 0 38.9 9.7" fill="none" stroke-width="8.6" stroke-linecap="round"/></g><g transform="translate(510.0 81.5) rotate(-16)"><circle r="42.0" fill="none" stroke-width="6.0"/><circle cx="-16.6" cy="-13.9" r="7.5" fill="#fff4d0" fill-opacity=".72" stroke="none"/><circle cx="16.6" cy="-13.9" r="7.5" fill="#fff4d0" fill-opacity=".72" stroke="none"/><path d="M-21.6 17.1H21.6" fill="none" stroke-width="7.8" stroke-linecap="round"/></g><g transform="translate(698.5 5.5) rotate(38)"><circle r="54.3" fill="none" stroke-width="6.4"/><circle cx="-21.3" cy="-17.8" r="8.8" fill="#fff4d0" fill-opacity=".72" stroke="none"/><circle cx="21.3" cy="-17.8" r="8.8" fill="#fff4d0" fill-opacity=".72" stroke="none"/><path d="M-25.9 35.6A28.8 28.8 0 0 1 25.9 35.6" fill="none" stroke-width="7.2" stroke-linecap="round"/></g><g transform="translate(82.0 183.0) rotate(0)"><circle r="79.4" fill="none" stroke-width="7.3"/><circle cx="-30.7" cy="-25.7" r="11.3" fill="#fff4d0" fill-opacity=".72" stroke="none"/><circle cx="30.7" cy="-25.7" r="11.3" fill="#fff4d0" fill-opacity=".72" stroke="none"/><path d="M-39.8 31.5H39.8" fill="none" stroke-width="11.1" stroke-linecap="round"/></g><g transform="translate(165.0 437.0) rotate(0)"><circle r="77.4" fill="none" stroke-width="7.2"/><circle cx="-30.0" cy="-25.1" r="11.1" fill="#fff4d0" fill-opacity=".72" stroke="none"/><circle cx="30.0" cy="-25.1" r="11.1" fill="#fff4d0" fill-opacity=".72" stroke="none"/><path d="M-38.9 9.7A45.4 45.4 0 0 0 38.9 9.7" fill="none" stroke-width="8.6" stroke-linecap="round"/></g><g transform="translate(82.0 683.0) rotate(-42)"><circle r="41.0" fill="none" stroke-width="6.0"/><circle cx="-16.3" cy="-13.6" r="7.4" fill="#fff4d0" fill-opacity=".72" stroke="none"/><circle cx="16.3" cy="-13.6" r="7.4" fill="#fff4d0" fill-opacity=".72" stroke="none"/><path d="M-19.8 27.3A22.0 22.0 0 0 1 19.8 27.3" fill="none" stroke-width="6.3" stroke-linecap="round"/></g><g transform="translate(277.0 777.0) rotate(-7)"><circle r="79.4" fill="none" stroke-width="7.3"/><circle cx="-30.7" cy="-25.7" r="11.3" fill="#fff4d0" fill-opacity=".72" stroke="none"/><circle cx="30.7" cy="-25.7" r="11.3" fill="#fff4d0" fill-opacity=".72" stroke="none"/><path d="M-39.8 10.0A46.5 46.5 0 0 0 39.8 10.0" fill="none" stroke-width="8.7" stroke-linecap="round"/></g><g transform="translate(1090.7 777.0) rotate(-7)"><circle r="78.4" fill="none" stroke-width="7.2"/><circle cx="-30.3" cy="-25.4" r="11.2" fill="#fff4d0" fill-opacity=".72" stroke="none"/><circle cx="30.3" cy="-25.4" r="11.2" fill="#fff4d0" fill-opacity=".72" stroke="none"/><path d="M-39.4 9.8A45.9 45.9 0 0 0 39.4 9.8" fill="none" stroke-width="8.7" stroke-linecap="round"/></g><g transform="translate(1363.5 643.5) rotate(-22)"><circle r="70.0" fill="none" stroke-width="7.0"/><circle cx="-27.2" cy="-22.8" r="10.4" fill="#fff4d0" fill-opacity=".72" stroke="none"/><circle cx="27.2" cy="-22.8" r="10.4" fill="#fff4d0" fill-opacity=".72" stroke="none"/><path d="M-35.3 27.9H35.3" fill="none" stroke-width="10.2" stroke-linecap="round"/></g><g transform="translate(1497.0 350.0) rotate(0)"><circle r="77.4" fill="none" stroke-width="7.2"/><circle cx="-30.0" cy="-25.1" r="11.1" fill="#fff4d0" fill-opacity=".72" stroke="none"/><circle cx="30.0" cy="-25.1" r="11.1" fill="#fff4d0" fill-opacity=".72" stroke="none"/><path d="M-38.9 9.7A45.4 45.4 0 0 0 38.9 9.7" fill="none" stroke-width="8.6" stroke-linecap="round"/></g><g transform="translate(1323.5 82.0) rotate(-16)"><circle r="42.0" fill="none" stroke-width="6.0"/><circle cx="-16.6" cy="-13.9" r="7.5" fill="#fff4d0" fill-opacity=".72" stroke="none"/><circle cx="16.6" cy="-13.9" r="7.5" fill="#fff4d0" fill-opacity=".72" stroke="none"/><path d="M-21.6 17.1H21.6" fill="none" stroke-width="7.8" stroke-linecap="round"/></g><g transform="translate(1090.6 -31.0) rotate(0)"><circle r="77.4" fill="none" stroke-width="7.2"/><circle cx="-30.0" cy="-25.1" r="11.1" fill="#fff4d0" fill-opacity=".72" stroke="none"/><circle cx="30.0" cy="-25.1" r="11.1" fill="#fff4d0" fill-opacity=".72" stroke="none"/><path d="M-38.9 9.7A45.4 45.4 0 0 0 38.9 9.7" fill="none" stroke-width="8.6" stroke-linecap="round"/></g><g transform="translate(910.0 162.0) rotate(0)"><circle r="57.7" fill="none" stroke-width="6.6"/><circle cx="-22.6" cy="-18.9" r="9.1" fill="#fff4d0" fill-opacity=".72" stroke="none"/><circle cx="22.6" cy="-18.9" r="9.1" fill="#fff4d0" fill-opacity=".72" stroke="none"/><path d="M-29.3 23.2H29.3" fill="none" stroke-width="9.2" stroke-linecap="round"/></g><g transform="translate(550.0 663.0) rotate(0)"><circle r="53.8" fill="none" stroke-width="6.4"/><circle cx="-21.1" cy="-17.7" r="8.7" fill="#fff4d0" fill-opacity=".72" stroke="none"/><circle cx="21.1" cy="-17.7" r="8.7" fill="#fff4d0" fill-opacity=".72" stroke="none"/><path d="M-27.4 6.8A31.9 31.9 0 0 0 27.4 6.8" fill="none" stroke-width="7.1" stroke-linecap="round"/></g><g transform="translate(897.0 670.0) rotate(0)"><circle r="53.8" fill="none" stroke-width="6.4"/><circle cx="-21.1" cy="-17.7" r="8.7" fill="#fff4d0" fill-opacity=".72" stroke="none"/><circle cx="21.1" cy="-17.7" r="8.7" fill="#fff4d0" fill-opacity=".72" stroke="none"/><path d="M-27.4 6.8A31.9 31.9 0 0 0 27.4 6.8" fill="none" stroke-width="7.1" stroke-linecap="round"/></g></g></g>
<rect x="102" y="134" width="1243" height="584" rx="98" fill="#5a3800" fill-opacity=".28" filter="url(#sht5)"/>
<path d="M596.5 139V103a36 36 0 0 1 36-36H823a36 36 0 0 1 36 36V139z" fill="url(#redt5)"/>
<rect x="110" y="141.7" width="1227.800" height="568.800" rx="91" fill="#fff" stroke="#000" stroke-width="7.5"/>
<circle cx="727.5" cy="775.5" r="110.5" fill="#2e75b6"/><text x="727.5" y="113.6" font-size="30.6" fill="#fff" text-anchor="middle" textLength="171" lengthAdjust="spacingAndGlyphs">CHARADES</text><text x="727.8" y="746.8" font-size="30.2" fill="#fff" text-anchor="middle">REVEAL</text><text x="727.5" y="782.8" font-size="30.2" fill="#fff" text-anchor="middle">ROUND</text><text transform="translate(725.5 446) scale(1.08 1)" font-size="120" fill="#000" stroke="#000" stroke-width="5" stroke-linejoin="miter" text-anchor="middle" textLength="611.1" lengthAdjust="spacing">Superman</text></svg><div class="num" style="top:523.0px;color:#333">6</div><svg class="ic" style="left:23.00px;top:583.00px" width="18" height="16" viewBox="0 0 18 16" fill="none" stroke="#4a4a4a" stroke-width="1.3" stroke-linecap="round" stroke-linejoin="round" ><path d="M1.500 5.500H4.500L9 1.800V14.200L4.500 10.500H1.500z"/><path d="M11.500 5.200a3.800 3.800 0 0 1 0 5.600M13.800 2.800a7 7 0 0 1 0 10.400"/></svg><div class="a" style="left:52px;top:516.0px;width:231px;height:131px;box-shadow:0 0 3px rgba(0,0,0,.12)"></div><svg class="" style="overflow:hidden;position:absolute;left:53px;top:517.0px" width="229.5" height="129.8" viewBox="0 0 1446 813" font-family="Liberation Sans, Arial, sans-serif" font-weight="bold"><defs>
<radialGradient id="rgt6" gradientUnits="userSpaceOnUse" cx="723" cy="406" r="830"><stop offset="0" stop-color="#fff" stop-opacity=".5"/><stop offset=".42" stop-color="#fff" stop-opacity=".36"/><stop offset=".72" stop-color="#fff" stop-opacity=".1"/><stop offset="1" stop-color="#fff" stop-opacity="0"/></radialGradient>
<linearGradient id="redt6" x1="0" y1="0" x2="0" y2="1"><stop offset="0" stop-color="#f8381d"/><stop offset="1" stop-color="#e3301d"/></linearGradient>
<filter id="sht6" x="-10%" y="-15%" width="120%" height="130%"><feGaussianBlur stdDeviation="19"/></filter>
</defs>
<clipPath id="cpt6"><rect width="1446" height="813"/></clipPath>
<g clip-path="url(#cpt6)"><rect width="1446" height="813" fill="#fdc311"/>
<g fill="#fed755" fill-opacity=".55"><polygon points="723,406.5 569,-1387 1131,-1347"/><polygon points="723,406.5 1609,-1160 2052,-807"/><polygon points="723,406.5 2214,-603 2370,-320"/><polygon points="723,406.5 2467,-38 2512,209"/><polygon points="723,406.5 2522,460 2503,673"/><polygon points="723,406.5 2429,981 2311,1254"/><polygon points="723,406.5 2122,1539 1824,1831"/><polygon points="723,406.5 1409,2071 974,2189"/><polygon points="723,406.5 472,2189 -141,1985"/><polygon points="723,406.5 -493,1734 -764,1421"/><polygon points="723,406.5 -928,1124 -1020,854"/><polygon points="723,406.5 -1067,592 -1076,347"/><polygon points="723,406.5 -1048,85 -982,-171"/><polygon points="723,406.5 -853,-463 -658,-748"/><polygon points="723,406.5 -363,-1029 75,-1273"/></g>
<rect width="1446" height="813" fill="url(#rgt6)"/>
<g stroke="#fff4d0" stroke-opacity=".72"><g transform="translate(278.4 -31.0) rotate(0)"><circle r="77.4" fill="none" stroke-width="7.2"/><circle cx="-30.0" cy="-25.1" r="11.1" fill="#fff4d0" fill-opacity=".72" stroke="none"/><circle cx="30.0" cy="-25.1" r="11.1" fill="#fff4d0" fill-opacity=".72" stroke="none"/><path d="M-38.9 9.7A45.4 45.4 0 0 0 38.9 9.7" fill="none" stroke-width="8.6" stroke-linecap="round"/></g><g transform="translate(510.0 81.5) rotate(-16)"><circle r="42.0" fill="none" stroke-width="6.0"/><circle cx="-16.6" cy="-13.9" r="7.5" fill="#fff4d0" fill-opacity=".72" stroke="none"/><circle cx="16.6" cy="-13.9" r="7.5" fill="#fff4d0" fill-opacity=".72" stroke="none"/><path d="M-21.6 17.1H21.6" fill="none" stroke-width="7.8" stroke-linecap="round"/></g><g transform="translate(698.5 5.5) rotate(38)"><circle r="54.3" fill="none" stroke-width="6.4"/><circle cx="-21.3" cy="-17.8" r="8.8" fill="#fff4d0" fill-opacity=".72" stroke="none"/><circle cx="21.3" cy="-17.8" r="8.8" fill="#fff4d0" fill-opacity=".72" stroke="none"/><path d="M-25.9 35.6A28.8 28.8 0 0 1 25.9 35.6" fill="none" stroke-width="7.2" stroke-linecap="round"/></g><g transform="translate(82.0 183.0) rotate(0)"><circle r="79.4" fill="none" stroke-width="7.3"/><circle cx="-30.7" cy="-25.7" r="11.3" fill="#fff4d0" fill-opacity=".72" stroke="none"/><circle cx="30.7" cy="-25.7" r="11.3" fill="#fff4d0" fill-opacity=".72" stroke="none"/><path d="M-39.8 31.5H39.8" fill="none" stroke-width="11.1" stroke-linecap="round"/></g><g transform="translate(165.0 437.0) rotate(0)"><circle r="77.4" fill="none" stroke-width="7.2"/><circle cx="-30.0" cy="-25.1" r="11.1" fill="#fff4d0" fill-opacity=".72" stroke="none"/><circle cx="30.0" cy="-25.1" r="11.1" fill="#fff4d0" fill-opacity=".72" stroke="none"/><path d="M-38.9 9.7A45.4 45.4 0 0 0 38.9 9.7" fill="none" stroke-width="8.6" stroke-linecap="round"/></g><g transform="translate(82.0 683.0) rotate(-42)"><circle r="41.0" fill="none" stroke-width="6.0"/><circle cx="-16.3" cy="-13.6" r="7.4" fill="#fff4d0" fill-opacity=".72" stroke="none"/><circle cx="16.3" cy="-13.6" r="7.4" fill="#fff4d0" fill-opacity=".72" stroke="none"/><path d="M-19.8 27.3A22.0 22.0 0 0 1 19.8 27.3" fill="none" stroke-width="6.3" stroke-linecap="round"/></g><g transform="translate(277.0 777.0) rotate(-7)"><circle r="79.4" fill="none" stroke-width="7.3"/><circle cx="-30.7" cy="-25.7" r="11.3" fill="#fff4d0" fill-opacity=".72" stroke="none"/><circle cx="30.7" cy="-25.7" r="11.3" fill="#fff4d0" fill-opacity=".72" stroke="none"/><path d="M-39.8 10.0A46.5 46.5 0 0 0 39.8 10.0" fill="none" stroke-width="8.7" stroke-linecap="round"/></g><g transform="translate(1090.7 777.0) rotate(-7)"><circle r="78.4" fill="none" stroke-width="7.2"/><circle cx="-30.3" cy="-25.4" r="11.2" fill="#fff4d0" fill-opacity=".72" stroke="none"/><circle cx="30.3" cy="-25.4" r="11.2" fill="#fff4d0" fill-opacity=".72" stroke="none"/><path d="M-39.4 9.8A45.9 45.9 0 0 0 39.4 9.8" fill="none" stroke-width="8.7" stroke-linecap="round"/></g><g transform="translate(1363.5 643.5) rotate(-22)"><circle r="70.0" fill="none" stroke-width="7.0"/><circle cx="-27.2" cy="-22.8" r="10.4" fill="#fff4d0" fill-opacity=".72" stroke="none"/><circle cx="27.2" cy="-22.8" r="10.4" fill="#fff4d0" fill-opacity=".72" stroke="none"/><path d="M-35.3 27.9H35.3" fill="none" stroke-width="10.2" stroke-linecap="round"/></g><g transform="translate(1497.0 350.0) rotate(0)"><circle r="77.4" fill="none" stroke-width="7.2"/><circle cx="-30.0" cy="-25.1" r="11.1" fill="#fff4d0" fill-opacity=".72" stroke="none"/><circle cx="30.0" cy="-25.1" r="11.1" fill="#fff4d0" fill-opacity=".72" stroke="none"/><path d="M-38.9 9.7A45.4 45.4 0 0 0 38.9 9.7" fill="none" stroke-width="8.6" stroke-linecap="round"/></g><g transform="translate(1323.5 82.0) rotate(-16)"><circle r="42.0" fill="none" stroke-width="6.0"/><circle cx="-16.6" cy="-13.9" r="7.5" fill="#fff4d0" fill-opacity=".72" stroke="none"/><circle cx="16.6" cy="-13.9" r="7.5" fill="#fff4d0" fill-opacity=".72" stroke="none"/><path d="M-21.6 17.1H21.6" fill="none" stroke-width="7.8" stroke-linecap="round"/></g><g transform="translate(1090.6 -31.0) rotate(0)"><circle r="77.4" fill="none" stroke-width="7.2"/><circle cx="-30.0" cy="-25.1" r="11.1" fill="#fff4d0" fill-opacity=".72" stroke="none"/><circle cx="30.0" cy="-25.1" r="11.1" fill="#fff4d0" fill-opacity=".72" stroke="none"/><path d="M-38.9 9.7A45.4 45.4 0 0 0 38.9 9.7" fill="none" stroke-width="8.6" stroke-linecap="round"/></g><g transform="translate(910.0 162.0) rotate(0)"><circle r="57.7" fill="none" stroke-width="6.6"/><circle cx="-22.6" cy="-18.9" r="9.1" fill="#fff4d0" fill-opacity=".72" stroke="none"/><circle cx="22.6" cy="-18.9" r="9.1" fill="#fff4d0" fill-opacity=".72" stroke="none"/><path d="M-29.3 23.2H29.3" fill="none" stroke-width="9.2" stroke-linecap="round"/></g><g transform="translate(550.0 663.0) rotate(0)"><circle r="53.8" fill="none" stroke-width="6.4"/><circle cx="-21.1" cy="-17.7" r="8.7" fill="#fff4d0" fill-opacity=".72" stroke="none"/><circle cx="21.1" cy="-17.7" r="8.7" fill="#fff4d0" fill-opacity=".72" stroke="none"/><path d="M-27.4 6.8A31.9 31.9 0 0 0 27.4 6.8" fill="none" stroke-width="7.1" stroke-linecap="round"/></g><g transform="translate(897.0 670.0) rotate(0)"><circle r="53.8" fill="none" stroke-width="6.4"/><circle cx="-21.1" cy="-17.7" r="8.7" fill="#fff4d0" fill-opacity=".72" stroke="none"/><circle cx="21.1" cy="-17.7" r="8.7" fill="#fff4d0" fill-opacity=".72" stroke="none"/><path d="M-27.4 6.8A31.9 31.9 0 0 0 27.4 6.8" fill="none" stroke-width="7.1" stroke-linecap="round"/></g></g></g>
<rect x="102" y="134" width="1243" height="584" rx="98" fill="#5a3800" fill-opacity=".28" filter="url(#sht6)"/>
<path d="M596.5 139V103a36 36 0 0 1 36-36H823a36 36 0 0 1 36 36V139z" fill="url(#redt6)"/>
<rect x="110" y="141.7" width="1227.800" height="568.800" rx="91" fill="#fff" stroke="#000" stroke-width="7.5"/>
<circle cx="727.5" cy="775.5" r="110.5" fill="#2e75b6"/><text x="727.5" y="113.6" font-size="30.6" fill="#fff" text-anchor="middle" textLength="171" lengthAdjust="spacingAndGlyphs">CHARADES</text><text x="727.8" y="746.8" font-size="30.2" fill="#fff" text-anchor="middle">REVEAL</text><text x="727.5" y="782.8" font-size="30.2" fill="#fff" text-anchor="middle">ROUND</text><text transform="translate(725.5 446) scale(1.08 1)" font-size="120" fill="#000" stroke="#000" stroke-width="5" stroke-linejoin="miter" text-anchor="middle" textLength="275.9" lengthAdjust="spacing">Chef</text></svg><div class="num" style="top:671.5px;color:#333">7</div><svg class="ic" style="left:23.00px;top:731.50px" width="18" height="16" viewBox="0 0 18 16" fill="none" stroke="#4a4a4a" stroke-width="1.3" stroke-linecap="round" stroke-linejoin="round" ><path d="M1.500 5.500H4.500L9 1.800V14.200L4.500 10.500H1.500z"/><path d="M11.500 5.200a3.800 3.800 0 0 1 0 5.600M13.800 2.800a7 7 0 0 1 0 10.400"/></svg><div class="a" style="left:52px;top:664.5px;width:231px;height:131px;box-shadow:0 0 3px rgba(0,0,0,.12)"></div><svg class="" style="overflow:hidden;position:absolute;left:53px;top:665.5px" width="229.5" height="129.8" viewBox="0 0 1446 813" font-family="Liberation Sans, Arial, sans-serif" font-weight="bold"><defs>
<radialGradient id="rgt7" gradientUnits="userSpaceOnUse" cx="723" cy="406" r="830"><stop offset="0" stop-color="#fff" stop-opacity=".5"/><stop offset=".42" stop-color="#fff" stop-opacity=".36"/><stop offset=".72" stop-color="#fff" stop-opacity=".1"/><stop offset="1" stop-color="#fff" stop-opacity="0"/></radialGradient>
<linearGradient id="redt7" x1="0" y1="0" x2="0" y2="1"><stop offset="0" stop-color="#f8381d"/><stop offset="1" stop-color="#e3301d"/></linearGradient>
<filter id="sht7" x="-10%" y="-15%" width="120%" height="130%"><feGaussianBlur stdDeviation="19"/></filter>
</defs>
<clipPath id="cpt7"><rect width="1446" height="813"/></clipPath>
<g clip-path="url(#cpt7)"><rect width="1446" height="813" fill="#fdc311"/>
<g fill="#fed755" fill-opacity=".55"><polygon points="723,406.5 569,-1387 1131,-1347"/><polygon points="723,406.5 1609,-1160 2052,-807"/><polygon points="723,406.5 2214,-603 2370,-320"/><polygon points="723,406.5 2467,-38 2512,209"/><polygon points="723,406.5 2522,460 2503,673"/><polygon points="723,406.5 2429,981 2311,1254"/><polygon points="723,406.5 2122,1539 1824,1831"/><polygon points="723,406.5 1409,2071 974,2189"/><polygon points="723,406.5 472,2189 -141,1985"/><polygon points="723,406.5 -493,1734 -764,1421"/><polygon points="723,406.5 -928,1124 -1020,854"/><polygon points="723,406.5 -1067,592 -1076,347"/><polygon points="723,406.5 -1048,85 -982,-171"/><polygon points="723,406.5 -853,-463 -658,-748"/><polygon points="723,406.5 -363,-1029 75,-1273"/></g>
<rect width="1446" height="813" fill="url(#rgt7)"/>
<g stroke="#fff4d0" stroke-opacity=".72"><g transform="translate(278.4 -31.0) rotate(0)"><circle r="77.4" fill="none" stroke-width="7.2"/><circle cx="-30.0" cy="-25.1" r="11.1" fill="#fff4d0" fill-opacity=".72" stroke="none"/><circle cx="30.0" cy="-25.1" r="11.1" fill="#fff4d0" fill-opacity=".72" stroke="none"/><path d="M-38.9 9.7A45.4 45.4 0 0 0 38.9 9.7" fill="none" stroke-width="8.6" stroke-linecap="round"/></g><g transform="translate(510.0 81.5) rotate(-16)"><circle r="42.0" fill="none" stroke-width="6.0"/><circle cx="-16.6" cy="-13.9" r="7.5" fill="#fff4d0" fill-opacity=".72" stroke="none"/><circle cx="16.6" cy="-13.9" r="7.5" fill="#fff4d0" fill-opacity=".72" stroke="none"/><path d="M-21.6 17.1H21.6" fill="none" stroke-width="7.8" stroke-linecap="round"/></g><g transform="translate(698.5 5.5) rotate(38)"><circle r="54.3" fill="none" stroke-width="6.4"/><circle cx="-21.3" cy="-17.8" r="8.8" fill="#fff4d0" fill-opacity=".72" stroke="none"/><circle cx="21.3" cy="-17.8" r="8.8" fill="#fff4d0" fill-opacity=".72" stroke="none"/><path d="M-25.9 35.6A28.8 28.8 0 0 1 25.9 35.6" fill="none" stroke-width="7.2" stroke-linecap="round"/></g><g transform="translate(82.0 183.0) rotate(0)"><circle r="79.4" fill="none" stroke-width="7.3"/><circle cx="-30.7" cy="-25.7" r="11.3" fill="#fff4d0" fill-opacity=".72" stroke="none"/><circle cx="30.7" cy="-25.7" r="11.3" fill="#fff4d0" fill-opacity=".72" stroke="none"/><path d="M-39.8 31.5H39.8" fill="none" stroke-width="11.1" stroke-linecap="round"/></g><g transform="translate(165.0 437.0) rotate(0)"><circle r="77.4" fill="none" stroke-width="7.2"/><circle cx="-30.0" cy="-25.1" r="11.1" fill="#fff4d0" fill-opacity=".72" stroke="none"/><circle cx="30.0" cy="-25.1" r="11.1" fill="#fff4d0" fill-opacity=".72" stroke="none"/><path d="M-38.9 9.7A45.4 45.4 0 0 0 38.9 9.7" fill="none" stroke-width="8.6" stroke-linecap="round"/></g><g transform="translate(82.0 683.0) rotate(-42)"><circle r="41.0" fill="none" stroke-width="6.0"/><circle cx="-16.3" cy="-13.6" r="7.4" fill="#fff4d0" fill-opacity=".72" stroke="none"/><circle cx="16.3" cy="-13.6" r="7.4" fill="#fff4d0" fill-opacity=".72" stroke="none"/><path d="M-19.8 27.3A22.0 22.0 0 0 1 19.8 27.3" fill="none" stroke-width="6.3" stroke-linecap="round"/></g><g transform="translate(277.0 777.0) rotate(-7)"><circle r="79.4" fill="none" stroke-width="7.3"/><circle cx="-30.7" cy="-25.7" r="11.3" fill="#fff4d0" fill-opacity=".72" stroke="none"/><circle cx="30.7" cy="-25.7" r="11.3" fill="#fff4d0" fill-opacity=".72" stroke="none"/><path d="M-39.8 10.0A46.5 46.5 0 0 0 39.8 10.0" fill="none" stroke-width="8.7" stroke-linecap="round"/></g><g transform="translate(1090.7 777.0) rotate(-7)"><circle r="78.4" fill="none" stroke-width="7.2"/><circle cx="-30.3" cy="-25.4" r="11.2" fill="#fff4d0" fill-opacity=".72" stroke="none"/><circle cx="30.3" cy="-25.4" r="11.2" fill="#fff4d0" fill-opacity=".72" stroke="none"/><path d="M-39.4 9.8A45.9 45.9 0 0 0 39.4 9.8" fill="none" stroke-width="8.7" stroke-linecap="round"/></g><g transform="translate(1363.5 643.5) rotate(-22)"><circle r="70.0" fill="none" stroke-width="7.0"/><circle cx="-27.2" cy="-22.8" r="10.4" fill="#fff4d0" fill-opacity=".72" stroke="none"/><circle cx="27.2" cy="-22.8" r="10.4" fill="#fff4d0" fill-opacity=".72" stroke="none"/><path d="M-35.3 27.9H35.3" fill="none" stroke-width="10.2" stroke-linecap="round"/></g><g transform="translate(1497.0 350.0) rotate(0)"><circle r="77.4" fill="none" stroke-width="7.2"/><circle cx="-30.0" cy="-25.1" r="11.1" fill="#fff4d0" fill-opacity=".72" stroke="none"/><circle cx="30.0" cy="-25.1" r="11.1" fill="#fff4d0" fill-opacity=".72" stroke="none"/><path d="M-38.9 9.7A45.4 45.4 0 0 0 38.9 9.7" fill="none" stroke-width="8.6" stroke-linecap="round"/></g><g transform="translate(1323.5 82.0) rotate(-16)"><circle r="42.0" fill="none" stroke-width="6.0"/><circle cx="-16.6" cy="-13.9" r="7.5" fill="#fff4d0" fill-opacity=".72" stroke="none"/><circle cx="16.6" cy="-13.9" r="7.5" fill="#fff4d0" fill-opacity=".72" stroke="none"/><path d="M-21.6 17.1H21.6" fill="none" stroke-width="7.8" stroke-linecap="round"/></g><g transform="translate(1090.6 -31.0) rotate(0)"><circle r="77.4" fill="none" stroke-width="7.2"/><circle cx="-30.0" cy="-25.1" r="11.1" fill="#fff4d0" fill-opacity=".72" stroke="none"/><circle cx="30.0" cy="-25.1" r="11.1" fill="#fff4d0" fill-opacity=".72" stroke="none"/><path d="M-38.9 9.7A45.4 45.4 0 0 0 38.9 9.7" fill="none" stroke-width="8.6" stroke-linecap="round"/></g><g transform="translate(910.0 162.0) rotate(0)"><circle r="57.7" fill="none" stroke-width="6.6"/><circle cx="-22.6" cy="-18.9" r="9.1" fill="#fff4d0" fill-opacity=".72" stroke="none"/><circle cx="22.6" cy="-18.9" r="9.1" fill="#fff4d0" fill-opacity=".72" stroke="none"/><path d="M-29.3 23.2H29.3" fill="none" stroke-width="9.2" stroke-linecap="round"/></g><g transform="translate(550.0 663.0) rotate(0)"><circle r="53.8" fill="none" stroke-width="6.4"/><circle cx="-21.1" cy="-17.7" r="8.7" fill="#fff4d0" fill-opacity=".72" stroke="none"/><circle cx="21.1" cy="-17.7" r="8.7" fill="#fff4d0" fill-opacity=".72" stroke="none"/><path d="M-27.4 6.8A31.9 31.9 0 0 0 27.4 6.8" fill="none" stroke-width="7.1" stroke-linecap="round"/></g><g transform="translate(897.0 670.0) rotate(0)"><circle r="53.8" fill="none" stroke-width="6.4"/><circle cx="-21.1" cy="-17.7" r="8.7" fill="#fff4d0" fill-opacity=".72" stroke="none"/><circle cx="21.1" cy="-17.7" r="8.7" fill="#fff4d0" fill-opacity=".72" stroke="none"/><path d="M-27.4 6.8A31.9 31.9 0 0 0 27.4 6.8" fill="none" stroke-width="7.1" stroke-linecap="round"/></g></g></g>
<rect x="102" y="134" width="1243" height="584" rx="98" fill="#5a3800" fill-opacity=".28" filter="url(#sht7)"/>
<path d="M596.5 139V103a36 36 0 0 1 36-36H823a36 36 0 0 1 36 36V139z" fill="url(#redt7)"/>
<rect x="110" y="141.7" width="1227.800" height="568.800" rx="91" fill="#fff" stroke="#000" stroke-width="7.5"/>
<circle cx="727.5" cy="775.5" r="110.5" fill="#2e75b6"/><text x="727.5" y="113.6" font-size="30.6" fill="#fff" text-anchor="middle" textLength="171" lengthAdjust="spacingAndGlyphs">CHARADES</text><text x="727.8" y="746.8" font-size="30.2" fill="#fff" text-anchor="middle">REVEAL</text><text x="727.5" y="782.8" font-size="30.2" fill="#fff" text-anchor="middle">ROUND</text><text transform="translate(725.5 446) scale(1.08 1)" font-size="120" fill="#000" stroke="#000" stroke-width="5" stroke-linejoin="miter" text-anchor="middle" textLength="455.6" lengthAdjust="spacing">Balloon</text></svg><div class="num" style="top:820.0px;color:#333">8</div><div class="a" style="left:52px;top:813.0px;width:231px;height:131px;box-shadow:0 0 3px rgba(0,0,0,.12)"></div><svg class="" style="overflow:hidden;position:absolute;left:53px;top:814.0px" width="229.5" height="129.8" viewBox="0 0 1446 813" font-family="Liberation Sans, Arial, sans-serif" font-weight="bold"><defs>
<radialGradient id="rgt8" gradientUnits="userSpaceOnUse" cx="723" cy="406" r="830"><stop offset="0" stop-color="#fff" stop-opacity=".5"/><stop offset=".42" stop-color="#fff" stop-opacity=".36"/><stop offset=".72" stop-color="#fff" stop-opacity=".1"/><stop offset="1" stop-color="#fff" stop-opacity="0"/></radialGradient>
<linearGradient id="redt8" x1="0" y1="0" x2="0" y2="1"><stop offset="0" stop-color="#f8381d"/><stop offset="1" stop-color="#e3301d"/></linearGradient>
<filter id="sht8" x="-10%" y="-15%" width="120%" height="130%"><feGaussianBlur stdDeviation="19"/></filter>
</defs>
<clipPath id="cpt8"><rect width="1446" height="813"/></clipPath>
<g clip-path="url(#cpt8)"><rect width="1446" height="813" fill="#fdc311"/>
<g fill="#fed755" fill-opacity=".55"><polygon points="723,406.5 569,-1387 1131,-1347"/><polygon points="723,406.5 1609,-1160 2052,-807"/><polygon points="723,406.5 2214,-603 2370,-320"/><polygon points="723,406.5 2467,-38 2512,209"/><polygon points="723,406.5 2522,460 2503,673"/><polygon points="723,406.5 2429,981 2311,1254"/><polygon points="723,406.5 2122,1539 1824,1831"/><polygon points="723,406.5 1409,2071 974,2189"/><polygon points="723,406.5 472,2189 -141,1985"/><polygon points="723,406.5 -493,1734 -764,1421"/><polygon points="723,406.5 -928,1124 -1020,854"/><polygon points="723,406.5 -1067,592 -1076,347"/><polygon points="723,406.5 -1048,85 -982,-171"/><polygon points="723,406.5 -853,-463 -658,-748"/><polygon points="723,406.5 -363,-1029 75,-1273"/></g>
<rect width="1446" height="813" fill="url(#rgt8)"/>
<g stroke="#fff4d0" stroke-opacity=".72"><g transform="translate(278.4 -31.0) rotate(0)"><circle r="77.4" fill="none" stroke-width="7.2"/><circle cx="-30.0" cy="-25.1" r="11.1" fill="#fff4d0" fill-opacity=".72" stroke="none"/><circle cx="30.0" cy="-25.1" r="11.1" fill="#fff4d0" fill-opacity=".72" stroke="none"/><path d="M-38.9 9.7A45.4 45.4 0 0 0 38.9 9.7" fill="none" stroke-width="8.6" stroke-linecap="round"/></g><g transform="translate(510.0 81.5) rotate(-16)"><circle r="42.0" fill="none" stroke-width="6.0"/><circle cx="-16.6" cy="-13.9" r="7.5" fill="#fff4d0" fill-opacity=".72" stroke="none"/><circle cx="16.6" cy="-13.9" r="7.5" fill="#fff4d0" fill-opacity=".72" stroke="none"/><path d="M-21.6 17.1H21.6" fill="none" stroke-width="7.8" stroke-linecap="round"/></g><g transform="translate(698.5 5.5) rotate(38)"><circle r="54.3" fill="none" stroke-width="6.4"/><circle cx="-21.3" cy="-17.8" r="8.8" fill="#fff4d0" fill-opacity=".72" stroke="none"/><circle cx="21.3" cy="-17.8" r="8.8" fill="#fff4d0" fill-opacity=".72" stroke="none"/><path d="M-25.9 35.6A28.8 28.8 0 0 1 25.9 35.6" fill="none" stroke-width="7.2" stroke-linecap="round"/></g><g transform="translate(82.0 183.0) rotate(0)"><circle r="79.4" fill="none" stroke-width="7.3"/><circle cx="-30.7" cy="-25.7" r="11.3" fill="#fff4d0" fill-opacity=".72" stroke="none"/><circle cx="30.7" cy="-25.7" r="11.3" fill="#fff4d0" fill-opacity=".72" stroke="none"/><path d="M-39.8 31.5H39.8" fill="none" stroke-width="11.1" stroke-linecap="round"/></g><g transform="translate(165.0 437.0) rotate(0)"><circle r="77.4" fill="none" stroke-width="7.2"/><circle cx="-30.0" cy="-25.1" r="11.1" fill="#fff4d0" fill-opacity=".72" stroke="none"/><circle cx="30.0" cy="-25.1" r="11.1" fill="#fff4d0" fill-opacity=".72" stroke="none"/><path d="M-38.9 9.7A45.4 45.4 0 0 0 38.9 9.7" fill="none" stroke-width="8.6" stroke-linecap="round"/></g><g transform="translate(82.0 683.0) rotate(-42)"><circle r="41.0" fill="none" stroke-width="6.0"/><circle cx="-16.3" cy="-13.6" r="7.4" fill="#fff4d0" fill-opacity=".72" stroke="none"/><circle cx="16.3" cy="-13.6" r="7.4" fill="#fff4d0" fill-opacity=".72" stroke="none"/><path d="M-19.8 27.3A22.0 22.0 0 0 1 19.8 27.3" fill="none" stroke-width="6.3" stroke-linecap="round"/></g><g transform="translate(277.0 777.0) rotate(-7)"><circle r="79.4" fill="none" stroke-width="7.3"/><circle cx="-30.7" cy="-25.7" r="11.3" fill="#fff4d0" fill-opacity=".72" stroke="none"/><circle cx="30.7" cy="-25.7" r="11.3" fill="#fff4d0" fill-opacity=".72" stroke="none"/><path d="M-39.8 10.0A46.5 46.5 0 0 0 39.8 10.0" fill="none" stroke-width="8.7" stroke-linecap="round"/></g><g transform="translate(1090.7 777.0) rotate(-7)"><circle r="78.4" fill="none" stroke-width="7.2"/><circle cx="-30.3" cy="-25.4" r="11.2" fill="#fff4d0" fill-opacity=".72" stroke="none"/><circle cx="30.3" cy="-25.4" r="11.2" fill="#fff4d0" fill-opacity=".72" stroke="none"/><path d="M-39.4 9.8A45.9 45.9 0 0 0 39.4 9.8" fill="none" stroke-width="8.7" stroke-linecap="round"/></g><g transform="translate(1363.5 643.5) rotate(-22)"><circle r="70.0" fill="none" stroke-width="7.0"/><circle cx="-27.2" cy="-22.8" r="10.4" fill="#fff4d0" fill-opacity=".72" stroke="none"/><circle cx="27.2" cy="-22.8" r="10.4" fill="#fff4d0" fill-opacity=".72" stroke="none"/><path d="M-35.3 27.9H35.3" fill="none" stroke-width="10.2" stroke-linecap="round"/></g><g transform="translate(1497.0 350.0) rotate(0)"><circle r="77.4" fill="none" stroke-width="7.2"/><circle cx="-30.0" cy="-25.1" r="11.1" fill="#fff4d0" fill-opacity=".72" stroke="none"/><circle cx="30.0" cy="-25.1" r="11.1" fill="#fff4d0" fill-opacity=".72" stroke="none"/><path d="M-38.9 9.7A45.4 45.4 0 0 0 38.9 9.7" fill="none" stroke-width="8.6" stroke-linecap="round"/></g><g transform="translate(1323.5 82.0) rotate(-16)"><circle r="42.0" fill="none" stroke-width="6.0"/><circle cx="-16.6" cy="-13.9" r="7.5" fill="#fff4d0" fill-opacity=".72" stroke="none"/><circle cx="16.6" cy="-13.9" r="7.5" fill="#fff4d0" fill-opacity=".72" stroke="none"/><path d="M-21.6 17.1H21.6" fill="none" stroke-width="7.8" stroke-linecap="round"/></g><g transform="translate(1090.6 -31.0) rotate(0)"><circle r="77.4" fill="none" stroke-width="7.2"/><circle cx="-30.0" cy="-25.1" r="11.1" fill="#fff4d0" fill-opacity=".72" stroke="none"/><circle cx="30.0" cy="-25.1" r="11.1" fill="#fff4d0" fill-opacity=".72" stroke="none"/><path d="M-38.9 9.7A45.4 45.4 0 0 0 38.9 9.7" fill="none" stroke-width="8.6" stroke-linecap="round"/></g><g transform="translate(910.0 162.0) rotate(0)"><circle r="57.7" fill="none" stroke-width="6.6"/><circle cx="-22.6" cy="-18.9" r="9.1" fill="#fff4d0" fill-opacity=".72" stroke="none"/><circle cx="22.6" cy="-18.9" r="9.1" fill="#fff4d0" fill-opacity=".72" stroke="none"/><path d="M-29.3 23.2H29.3" fill="none" stroke-width="9.2" stroke-linecap="round"/></g><g transform="translate(550.0 663.0) rotate(0)"><circle r="53.8" fill="none" stroke-width="6.4"/><circle cx="-21.1" cy="-17.7" r="8.7" fill="#fff4d0" fill-opacity=".72" stroke="none"/><circle cx="21.1" cy="-17.7" r="8.7" fill="#fff4d0" fill-opacity=".72" stroke="none"/><path d="M-27.4 6.8A31.9 31.9 0 0 0 27.4 6.8" fill="none" stroke-width="7.1" stroke-linecap="round"/></g><g transform="translate(897.0 670.0) rotate(0)"><circle r="53.8" fill="none" stroke-width="6.4"/><circle cx="-21.1" cy="-17.7" r="8.7" fill="#fff4d0" fill-opacity=".72" stroke="none"/><circle cx="21.1" cy="-17.7" r="8.7" fill="#fff4d0" fill-opacity=".72" stroke="none"/><path d="M-27.4 6.8A31.9 31.9 0 0 0 27.4 6.8" fill="none" stroke-width="7.1" stroke-linecap="round"/></g></g></g>
<rect x="102" y="134" width="1243" height="584" rx="98" fill="#5a3800" fill-opacity=".28" filter="url(#sht8)"/>
<path d="M596.5 139V103a36 36 0 0 1 36-36H823a36 36 0 0 1 36 36V139z" fill="url(#redt8)"/>
<rect x="110" y="141.7" width="1227.800" height="568.800" rx="91" fill="#fff" stroke="#000" stroke-width="7.5"/>
<circle cx="727.5" cy="775.5" r="110.5" fill="#2e75b6"/><text x="727.5" y="113.6" font-size="30.6" fill="#fff" text-anchor="middle" textLength="171" lengthAdjust="spacingAndGlyphs">CHARADES</text><text x="727.8" y="746.8" font-size="30.2" fill="#fff" text-anchor="middle">REVEAL</text><text x="727.5" y="782.8" font-size="30.2" fill="#fff" text-anchor="middle">ROUND</text><text transform="translate(725.5 446) scale(1.08 1)" font-size="120" fill="#000" stroke="#000" stroke-width="5" stroke-linejoin="miter" text-anchor="middle" textLength="0.0" lengthAdjust="spacing"></text></svg></div><div class="a" style="left:306px;top:240px;width:7px;height:77px;border-radius:3.500px;background:#d2d2d2"></div><svg class="ic" style="left:149.00px;top:1018.00px" width="18" height="18" viewBox="0 0 18 18" fill="none" stroke="#333" stroke-width="1.9" stroke-linecap="round" stroke-linejoin="round" ><path d="M9 1V17M1 9H17"/></svg>
<div class="a" style="left:321px;top:139px;width:1px;height:923px;background:#d6d6d6"></div>
<div class="a" style="left:322px;top:139px;width:1528px;height:882px;background:#efefef"></div>
<div class="a" style="left:351px;top:162px;width:1448px;height:815px;box-shadow:0 1px 4px rgba(0,0,0,.22)"></div>
<svg class="" style="overflow:hidden;position:absolute;left:352px;top:163px" width="1446" height="818" viewBox="0 0 1446 818" font-family="Liberation Sans, Arial, sans-serif" font-weight="bold"><defs>
<radialGradient id="rgm" gradientUnits="userSpaceOnUse" cx="723" cy="406" r="830"><stop offset="0" stop-color="#fff" stop-opacity=".5"/><stop offset=".42" stop-color="#fff" stop-opacity=".36"/><stop offset=".72" stop-color="#fff" stop-opacity=".1"/><stop offset="1" stop-color="#fff" stop-opacity="0"/></radialGradient>
<linearGradient id="redm" x1="0" y1="0" x2="0" y2="1"><stop offset="0" stop-color="#f8381d"/><stop offset="1" stop-color="#e3301d"/></linearGradient>
<filter id="shm" x="-10%" y="-15%" width="120%" height="130%"><feGaussianBlur stdDeviation="19"/></filter>
</defs>
<clipPath id="cpm"><rect width="1446" height="813"/></clipPath>
<g clip-path="url(#cpm)"><rect width="1446" height="813" fill="#fdc311"/>
<g fill="#fed755" fill-opacity=".55"><polygon points="723,406.5 569,-1387 1131,-1347"/><polygon points="723,406.5 1609,-1160 2052,-807"/><polygon points="723,406.5 2214,-603 2370,-320"/><polygon points="723,406.5 2467,-38 2512,209"/><polygon points="723,406.5 2522,460 2503,673"/><polygon points="723,406.5 2429,981 2311,1254"/><polygon points="723,406.5 2122,1539 1824,1831"/><polygon points="723,406.5 1409,2071 974,2189"/><polygon points="723,406.5 472,2189 -141,1985"/><polygon points="723,406.5 -493,1734 -764,1421"/><polygon points="723,406.5 -928,1124 -1020,854"/><polygon points="723,406.5 -1067,592 -1076,347"/><polygon points="723,406.5 -1048,85 -982,-171"/><polygon points="723,406.5 -853,-463 -658,-748"/><polygon points="723,406.5 -363,-1029 75,-1273"/></g>
<rect width="1446" height="813" fill="url(#rgm)"/>
<g stroke="#fff4d0" stroke-opacity=".72"><g transform="translate(278.4 -31.0) rotate(0)"><circle r="77.4" fill="none" stroke-width="7.2"/><circle cx="-30.0" cy="-25.1" r="11.1" fill="#fff4d0" fill-opacity=".72" stroke="none"/><circle cx="30.0" cy="-25.1" r="11.1" fill="#fff4d0" fill-opacity=".72" stroke="none"/><path d="M-38.9 9.7A45.4 45.4 0 0 0 38.9 9.7" fill="none" stroke-width="8.6" stroke-linecap="round"/></g><g transform="translate(510.0 81.5) rotate(-16)"><circle r="42.0" fill="none" stroke-width="6.0"/><circle cx="-16.6" cy="-13.9" r="7.5" fill="#fff4d0" fill-opacity=".72" stroke="none"/><circle cx="16.6" cy="-13.9" r="7.5" fill="#fff4d0" fill-opacity=".72" stroke="none"/><path d="M-21.6 17.1H21.6" fill="none" stroke-width="7.8" stroke-linecap="round"/></g><g transform="translate(698.5 5.5) rotate(38)"><circle r="54.3" fill="none" stroke-width="6.4"/><circle cx="-21.3" cy="-17.8" r="8.8" fill="#fff4d0" fill-opacity=".72" stroke="none"/><circle cx="21.3" cy="-17.8" r="8.8" fill="#fff4d0" fill-opacity=".72" stroke="none"/><path d="M-25.9 35.6A28.8 28.8 0 0 1 25.9 35.6" fill="none" stroke-width="7.2" stroke-linecap="round"/></g><g transform="translate(82.0 183.0) rotate(0)"><circle r="79.4" fill="none" stroke-width="7.3"/><circle cx="-30.7" cy="-25.7" r="11.3" fill="#fff4d0" fill-opacity=".72" stroke="none"/><circle cx="30.7" cy="-25.7" r="11.3" fill="#fff4d0" fill-opacity=".72" stroke="none"/><path d="M-39.8 31.5H39.8" fill="none" stroke-width="11.1" stroke-linecap="round"/></g><g transform="translate(165.0 437.0) rotate(0)"><circle r="77.4" fill="none" stroke-width="7.2"/><circle cx="-30.0" cy="-25.1" r="11.1" fill="#fff4d0" fill-opacity=".72" stroke="none"/><circle cx="30.0" cy="-25.1" r="11.1" fill="#fff4d0" fill-opacity=".72" stroke="none"/><path d="M-38.9 9.7A45.4 45.4 0 0 0 38.9 9.7" fill="none" stroke-width="8.6" stroke-linecap="round"/></g><g transform="translate(82.0 683.0) rotate(-42)"><circle r="41.0" fill="none" stroke-width="6.0"/><circle cx="-16.3" cy="-13.6" r="7.4" fill="#fff4d0" fill-opacity=".72" stroke="none"/><circle cx="16.3" cy="-13.6" r="7.4" fill="#fff4d0" fill-opacity=".72" stroke="none"/><path d="M-19.8 27.3A22.0 22.0 0 0 1 19.8 27.3" fill="none" stroke-width="6.3" stroke-linecap="round"/></g><g transform="translate(277.0 777.0) rotate(-7)"><circle r="79.4" fill="none" stroke-width="7.3"/><circle cx="-30.7" cy="-25.7" r="11.3" fill="#fff4d0" fill-opacity=".72" stroke="none"/><circle cx="30.7" cy="-25.7" r="11.3" fill="#fff4d0" fill-opacity=".72" stroke="none"/><path d="M-39.8 10.0A46.5 46.5 0 0 0 39.8 10.0" fill="none" stroke-width="8.7" stroke-linecap="round"/></g><g transform="translate(1090.7 777.0) rotate(-7)"><circle r="78.4" fill="none" stroke-width="7.2"/><circle cx="-30.3" cy="-25.4" r="11.2" fill="#fff4d0" fill-opacity=".72" stroke="none"/><circle cx="30.3" cy="-25.4" r="11.2" fill="#fff4d0" fill-opacity=".72" stroke="none"/><path d="M-39.4 9.8A45.9 45.9 0 0 0 39.4 9.8" fill="none" stroke-width="8.7" stroke-linecap="round"/></g><g transform="translate(1363.5 643.5) rotate(-22)"><circle r="70.0" fill="none" stroke-width="7.0"/><circle cx="-27.2" cy="-22.8" r="10.4" fill="#fff4d0" fill-opacity=".72" stroke="none"/><circle cx="27.2" cy="-22.8" r="10.4" fill="#fff4d0" fill-opacity=".72" stroke="none"/><path d="M-35.3 27.9H35.3" fill="none" stroke-width="10.2" stroke-linecap="round"/></g><g transform="translate(1497.0 350.0) rotate(0)"><circle r="77.4" fill="none" stroke-width="7.2"/><circle cx="-30.0" cy="-25.1" r="11.1" fill="#fff4d0" fill-opacity=".72" stroke="none"/><circle cx="30.0" cy="-25.1" r="11.1" fill="#fff4d0" fill-opacity=".72" stroke="none"/><path d="M-38.9 9.7A45.4 45.4 0 0 0 38.9 9.7" fill="none" stroke-width="8.6" stroke-linecap="round"/></g><g transform="translate(1323.5 82.0) rotate(-16)"><circle r="42.0" fill="none" stroke-width="6.0"/><circle cx="-16.6" cy="-13.9" r="7.5" fill="#fff4d0" fill-opacity=".72" stroke="none"/><circle cx="16.6" cy="-13.9" r="7.5" fill="#fff4d0" fill-opacity=".72" stroke="none"/><path d="M-21.6 17.1H21.6" fill="none" stroke-width="7.8" stroke-linecap="round"/></g><g transform="translate(1090.6 -31.0) rotate(0)"><circle r="77.4" fill="none" stroke-width="7.2"/><circle cx="-30.0" cy="-25.1" r="11.1" fill="#fff4d0" fill-opacity=".72" stroke="none"/><circle cx="30.0" cy="-25.1" r="11.1" fill="#fff4d0" fill-opacity=".72" stroke="none"/><path d="M-38.9 9.7A45.4 45.4 0 0 0 38.9 9.7" fill="none" stroke-width="8.6" stroke-linecap="round"/></g><g transform="translate(910.0 162.0) rotate(0)"><circle r="57.7" fill="none" stroke-width="6.6"/><circle cx="-22.6" cy="-18.9" r="9.1" fill="#fff4d0" fill-opacity=".72" stroke="none"/><circle cx="22.6" cy="-18.9" r="9.1" fill="#fff4d0" fill-opacity=".72" stroke="none"/><path d="M-29.3 23.2H29.3" fill="none" stroke-width="9.2" stroke-linecap="round"/></g><g transform="translate(550.0 663.0) rotate(0)"><circle r="53.8" fill="none" stroke-width="6.4"/><circle cx="-21.1" cy="-17.7" r="8.7" fill="#fff4d0" fill-opacity=".72" stroke="none"/><circle cx="21.1" cy="-17.7" r="8.7" fill="#fff4d0" fill-opacity=".72" stroke="none"/><path d="M-27.4 6.8A31.9 31.9 0 0 0 27.4 6.8" fill="none" stroke-width="7.1" stroke-linecap="round"/></g><g transform="translate(897.0 670.0) rotate(0)"><circle r="53.8" fill="none" stroke-width="6.4"/><circle cx="-21.1" cy="-17.7" r="8.7" fill="#fff4d0" fill-opacity=".72" stroke="none"/><circle cx="21.1" cy="-17.7" r="8.7" fill="#fff4d0" fill-opacity=".72" stroke="none"/><path d="M-27.4 6.8A31.9 31.9 0 0 0 27.4 6.8" fill="none" stroke-width="7.1" stroke-linecap="round"/></g></g></g>
<rect x="102" y="134" width="1243" height="584" rx="98" fill="#5a3800" fill-opacity=".62" filter="url(#shm)"/>
<path d="M596.5 139V103a36 36 0 0 1 36-36H823a36 36 0 0 1 36 36V139z" fill="url(#redm)"/>
<rect x="110" y="141.7" width="1227.800" height="568.800" rx="91" fill="#fff" stroke="#000" stroke-width="7.5"/>
<circle cx="727.5" cy="775.5" r="110.5" fill="#2e75b6"/><text x="727.5" y="113.6" font-size="30.6" fill="#fff" text-anchor="middle" textLength="171" lengthAdjust="spacingAndGlyphs">CHARADES</text><text x="727.8" y="746.8" font-size="30.2" fill="#fff" text-anchor="middle">REVEAL</text><text x="727.5" y="782.8" font-size="30.2" fill="#fff" text-anchor="middle">ROUND</text><text transform="translate(725.5 446) scale(1.08 1)" font-size="120" fill="#000" stroke="#000" stroke-width="5" stroke-linejoin="miter" text-anchor="middle" textLength="549.1" lengthAdjust="spacing">Sneezing</text></svg>
<svg class="ic" style="left:1836.10px;top:147.30px" width="7.2" height="5.4" fill="#6b6b6b"><polygon points="0,5.4 3.6,0 7.2,5.4"/></svg><div class="a" style="left:1835px;top:193px;width:9px;height:54px;border-radius:4.500px;background:#cfcfcf"></div><svg class="ic" style="left:1836.10px;top:962.80px" width="7.2" height="5.4" fill="#6b6b6b"><polygon points="0,0 7.2,0 3.6,5.4"/></svg><svg class="ic" style="left:1834.70px;top:979.00px" width="10" height="12" viewBox="0 0 10 12" fill="none" stroke="#6b6b6b" stroke-width="0.8" stroke-linecap="round" stroke-linejoin="round" ><path d="M1.500 5.500L5 2L8.500 5.500z M1.500 10.500L5 7L8.500 10.500z" fill="#6b6b6b"/></svg><svg class="ic" style="left:1834.70px;top:999.00px" width="10" height="12" viewBox="0 0 10 12" fill="none" stroke="#6b6b6b" stroke-width="0.8" stroke-linecap="round" stroke-linejoin="round" ><path d="M1.500 1.500L5 5L8.500 1.500z M1.500 6.500L5 10L8.500 6.500z" fill="#6b6b6b"/></svg><svg class="ic" style="left:334.30px;top:1006.40px" width="5.4" height="7.2" fill="#6b6b6b"><polygon points="5.4,0 5.4,7.2 0,3.6"/></svg><svg class="ic" style="left:1811.80px;top:1006.40px" width="5.4" height="7.2" fill="#6b6b6b"><polygon points="0,0 0,7.2 5.4,3.6"/></svg><div class="a" style="left:352px;top:1005.500px;width:1241px;height:9px;border-radius:4.500px;background:#d3d3d3"></div><div class="a" style="left:322px;top:1020px;width:1528px;height:1px;background:#dadada"></div><div class="a" style="left:322px;top:1021px;width:1528px;height:41px;background:#eeeeee"></div><div class="t" style="left:334.50px;top:1026.6px;font-size:16.5px;letter-spacing:-0.012px;color:#8c8c8c">Click to add notes</div>
<div class="a" style="left:1850px;top:139px;width:1px;height:923px;background:#d9d9d9"></div><div class="a" style="left:1851px;top:139px;width:69px;height:923px;background:#eeeeee"></div><svg class="ic" style="left:1876.70px;top:168.60px" width="18" height="2" viewBox="0 0 18 2" fill="none" stroke="#a6a6a6" stroke-width="1.6" stroke-linecap="round" stroke-linejoin="round" ><path d="M1 1H17"/></svg><svg class="ic" style="left:1874.70px;top:198.70px" width="22" height="22" viewBox="0 0 22 22" fill="none" stroke="#3f3f3f" stroke-width="1.3" stroke-linecap="round" stroke-linejoin="round" ><path d="M5.500 3.200L8.200 .5L21 13.300L18.300 16z" transform="translate(-1 2.500)"/><path d="M8.800 9.200L11.500 6.500" /><path d="M17.500 1L18.300 3.200L20.500 4L18.300 4.800L17.500 7L16.700 4.800L14.500 4L16.700 3.200z" stroke-width="1.100"/><path d="M4 12L5 14.500L7.500 15.500L5 16.500L4 19L3 16.500L.5 15.500L3 14.500z" stroke-width="1.100"/></svg><svg class="ic" style="left:1874.70px;top:250.00px" width="22" height="22" viewBox="0 0 22 22" fill="none" stroke="#3f3f3f" stroke-width="1.3" stroke-linecap="round" stroke-linejoin="round" ><path d="M12 20.500H5.500V9.500L3.500 10.800L1 6.500L7 2.500H8.500a2.600 2.600 0 0 0 5 0H15L21 6.500L18.500 10.800L16.500 9.500V11"/><path d="M15.500 11.500L16.800 14.300L19.800 14.600L17.500 16.600L18.200 19.600L15.500 18L12.800 19.600L13.500 16.600L11.200 14.600L14.200 14.300z" stroke-width="1.100"/><path d="M18.500 18.500L20.500 21.500" stroke-width="1.200"/></svg><svg class="ic" style="left:1874.70px;top:299.00px" width="22" height="22" viewBox="0 0 22 22" fill="none" stroke="#3f3f3f" stroke-width="1.3" stroke-linecap="round" stroke-linejoin="round" ><path d="M8 11.500H2.300a.8.800 0 0 1-.8-.8V2.300a.8.800 0 0 1 .8-.8H14.700a.8.800 0 0 1 .8.800V7"/><rect x="8.500" y="7.500" width="12" height="10" rx=".8"/><path d="M1.500 14.500c0 3 2 4.500 5.500 4.500M5 16.800L7.200 19L5 21.200"/><path d="M10.500 20.500H20"/></svg><svg class="ic" style="left:1874.70px;top:349.00px" width="22" height="22" viewBox="0 0 22 22" fill="none" stroke="#3f3f3f" stroke-width="1.3" stroke-linecap="round" stroke-linejoin="round" ><path d="M6.500 9.500L2.500 8.500L8.500 7.200L11.500 1.500L14.500 7.200L20.500 8.500L16.300 13L17.200 19.500L13.500 17.200"/><path d="M2 12.500H9M3.500 15.500H10M5.500 18.500H9.500"/></svg><svg class="ic" style="left:1874.70px;top:400.00px" width="22" height="20" viewBox="0 0 22 20" fill="none" stroke="#3f3f3f" stroke-width="1.3" stroke-linecap="round" stroke-linejoin="round" ><path d="M1 5H4.500M9.500 5H21M1 14.500H12.500M17.500 14.500H21"/><rect x="4.500" y="1.500" width="5" height="7" rx="2.500"/><rect x="12.500" y="11" width="5" height="7" rx="2.500"/></svg><svg class="ic" style="left:1874.70px;top:447.70px" width="22" height="22" viewBox="0 0 22 22" fill="none" stroke="#3f3f3f" stroke-width="1.4" stroke-linecap="round" stroke-linejoin="round" ><path d="M3.200 6.500A9 9 0 1 1 2 11"/><path d="M2.200 2.500V7H6.700"/><path d="M11 5.500V11.200L14.800 15"/></svg><svg class="ic" style="left:1874.70px;top:499.30px" width="22" height="22" viewBox="0 0 22 22" fill="none" stroke="#3f3f3f" stroke-width="1.4" stroke-linecap="round" stroke-linejoin="round" ><circle cx="11" cy="11" r="9.500"/><path d="M7.800 8.500a3.200 3.200 0 1 1 4.800 2.800c-1 .6-1.600 1.200-1.600 2.500"/><circle cx="11" cy="16.500" r=".9" fill="#3f3f3f" stroke="none"/></svg><svg class="ic" style="left:1874.70px;top:557.50px" width="22" height="6" viewBox="0 0 22 6" fill="none" stroke="#3f3f3f" stroke-width="1.2" stroke-linecap="round" stroke-linejoin="round" ><circle cx="3" cy="3" r="2"/><circle cx="11" cy="3" r="2"/><circle cx="19" cy="3" r="2"/></svg>
<div class="a" style="left:0;top:1062px;width:1920px;height:18px;background:#eeeeee;border-top:1px solid #dcdcdc"></div><div class="t" style="left:12.50px;top:1067px;font-size:14.6px;letter-spacing:0.082px;">Slide 3 / 54</div><div class="a" style="left:97px;top:1067px;width:1px;height:13px;background:#d6d6d6"></div><svg class="ic" style="left:115.00px;top:1067.50px" width="20" height="18" viewBox="0 0 20 18" fill="none" stroke="#404040" stroke-width="1.4" stroke-linecap="round" stroke-linejoin="round" ><path d="M7 1.500a3 3 0 0 0 6 0H14.500L19 5L16.800 8.500L15 7.500V16.500H5V7.500L3.200 8.500L1 5L5.500 1.500z"/><path d="M12.500 9.500l.8 1.600 1.700.2-1.300 1.200.4 1.700-1.600-.9-1.600.9.400-1.700-1.300-1.200 1.700-.2z" stroke-width="1"/></svg><div class="t" style="left:141.00px;top:1067px;font-size:14.6px;letter-spacing:0.082px;">Office Theme</div><div class="a" style="left:247px;top:1067px;width:1px;height:13px;background:#d6d6d6"></div><svg class="ic" style="left:265px;top:1068px" width="16" height="15" viewBox="0 0 16 15"><path d="M8 .8L15.500 14.200H.5z" fill="#f5a623"/><path d="M8 5.500V10" stroke="#fff" stroke-width="1.500" stroke-linecap="round"/><circle cx="8" cy="12.200" r=".9" fill="#fff"/></svg><div class="t" style="left:290.00px;top:1067px;font-size:14.6px;letter-spacing:-0.073px;">Font Missing</div><svg class="ic" style="left:1077.40px;top:1068.00px" width="18" height="18" viewBox="0 0 18 18" fill="none" stroke="#404040" stroke-width="1.4" stroke-linecap="round" stroke-linejoin="round" ><rect x=".9" y="3" width="16" height="15" rx="1"/><path d="M8.300 6.500V12H12"/></svg><svg class="ic" style="left:1118.00px;top:1067.50px" width="18" height="18" viewBox="0 0 18 18" fill="none" stroke="#404040" stroke-width="1.4" stroke-linecap="round" stroke-linejoin="round" ><path d="M7 1.500H16.500V16.500H7"/><path d="M1 9H11M8 5.500L11.500 9L8 12.500"/></svg><div class="a" style="left:1151px;top:1067px;width:1px;height:13px;background:#d6d6d6"></div><svg class="ic" style="left:1170.50px;top:1068.00px" width="18" height="16" viewBox="0 0 18 16" fill="none" stroke="#404040" stroke-width="1.4" stroke-linecap="round" stroke-linejoin="round" ><path d="M1 3.500H8M14 1.500L11.500 4L9.500 2.200M1 8.500H17M1 13.500H17"/></svg><div class="t" style="left:1194.50px;top:1067px;font-size:14.6px;letter-spacing:0.100px;">Notes</div><svg class="ic" style="left:1237.50px;top:1074.00px" width="10" height="8" viewBox="0 0 10 8" fill="none" stroke="#404040" stroke-width="1.5" stroke-linecap="round" stroke-linejoin="round" ><path d="M2.3 2.5L5 5.5L7.7 2.5"/></svg><svg class="ic" style="left:1271.00px;top:1068.00px" width="18" height="18" viewBox="0 0 18 18" fill="none" stroke="#404040" stroke-width="1.4" stroke-linecap="round" stroke-linejoin="round" ><path d="M2.300 1.500H15.700a.8.800 0 0 1 .8.800V11.700a.8.800 0 0 1-.8.800H8L4.500 16V12.500H2.300a.8.800 0 0 1-.8-.8V2.300a.8.800 0 0 1 .8-.8z"/></svg><div class="t" style="left:1296.50px;top:1067px;font-size:14.6px;letter-spacing:0.200px;">Comment</div><div class="a" style="left:1378px;top:1067px;width:1px;height:13px;background:#d6d6d6"></div><div class="a" style="left:1390px;top:1063px;width:29px;height:20px;border-radius:3px;background:#dcdcdc"></div><svg class="ic" style="left:1395.50px;top:1068.00px" width="18" height="18" viewBox="0 0 18 18" fill="none" stroke="#404040" stroke-width="1.4" stroke-linecap="round" stroke-linejoin="round" ><rect x="1.500" y="1.500" width="15" height="15" rx=".8"/><path d="M6.500 1.500V16.500"/></svg><svg class="ic" style="left:1435.50px;top:1068.00px" width="18" height="18" viewBox="0 0 18 18" fill="none" stroke="#404040" stroke-width="1.4" stroke-linecap="round" stroke-linejoin="round" ><rect x="1.500" y="1.500" width="5.500" height="5.500"/><rect x="11" y="1.500" width="5.500" height="5.500"/><rect x="1.500" y="11" width="5.500" height="5.500"/><rect x="11" y="11" width="5.500" height="5.500"/></svg><svg class="ic" style="left:1476.00px;top:1068.00px" width="18" height="18" viewBox="0 0 18 18" fill="none" stroke="#404040" stroke-width="1.4" stroke-linecap="round" stroke-linejoin="round" ><path d="M9 4C7 2 4 1.800 1.500 2.500V15.500C4 14.800 7 15 9 17C11 15 14 14.800 16.500 15.500V2.500C14 1.800 11 2 9 4zM9 4V17"/></svg><div class="a" style="left:1508px;top:1067px;width:1px;height:13px;background:#d6d6d6"></div><div class="a" style="left:1523px;top:1065px;width:26px;height:24px;border-radius:4px;background:#e6651d"></div><svg class="ic" style="left:1531px;top:1071px" width="11" height="12" viewBox="0 0 11 12"><path d="M1.500 1L9.500 6L1.500 11z" fill="#fff"/></svg><div class="a" style="left:1562px;top:1067px;width:1px;height:13px;background:#d6d6d6"></div><svg class="ic" style="left:1578.00px;top:1067.50px" width="18" height="18" viewBox="0 0 18 18" fill="none" stroke="#404040" stroke-width="1.4" stroke-linecap="round" stroke-linejoin="round" ><path d="M1.500 5.500V2.300a.8.800 0 0 1 .8-.8H5.500M12.500 1.500h3.200a.8.800 0 0 1 .8.800V5.500M16.500 12.500v3.200a.8.800 0 0 1-.8.800H12.500M5.500 16.500H2.300a.8.800 0 0 1-.8-.8V12.500"/><rect x="5.500" y="5.500" width="7" height="7"/></svg><div class="t" style="left:1625.50px;top:1067px;font-size:14.6px;letter-spacing:-1.100px;">90%</div><svg class="ic" style="left:1669.50px;top:1074.00px" width="10" height="8" viewBox="0 0 10 8" fill="none" stroke="#404040" stroke-width="1.5" stroke-linecap="round" stroke-linejoin="round" ><path d="M2.3 2.5L5 5.5L7.7 2.5"/></svg><svg class="ic" style="left:1701.00px;top:1074.50px" width="14" height="4" viewBox="0 0 14 4" fill="none" stroke="#333" stroke-width="2.4" stroke-linecap="round" stroke-linejoin="round" style="stroke-linecap:butt"><path d="M1.500 2H12.500"/></svg><div class="a" style="left:1733px;top:1075.200px;width:133px;height:1.600px;background:#c0c0c0;border-radius:1px"></div><div class="a" style="left:1733px;top:1074.800px;width:58px;height:2.400px;background:#3c68c4;border-radius:1px"></div><div class="a" style="left:1788px;top:1071.500px;width:9px;height:9px;border-radius:50%;background:#9a9a9a;border:1.800px solid #fff;box-shadow:0 0 1.500px rgba(0,0,0,.5)"></div><svg class="ic" style="left:1885.50px;top:1070.50px" width="12" height="12" viewBox="0 0 12 12" fill="none" stroke="#333" stroke-width="2.4" stroke-linecap="round" stroke-linejoin="round" ><path d="M6 .5V11.500M.5 6H11.500"/></svg>
</body></html>
